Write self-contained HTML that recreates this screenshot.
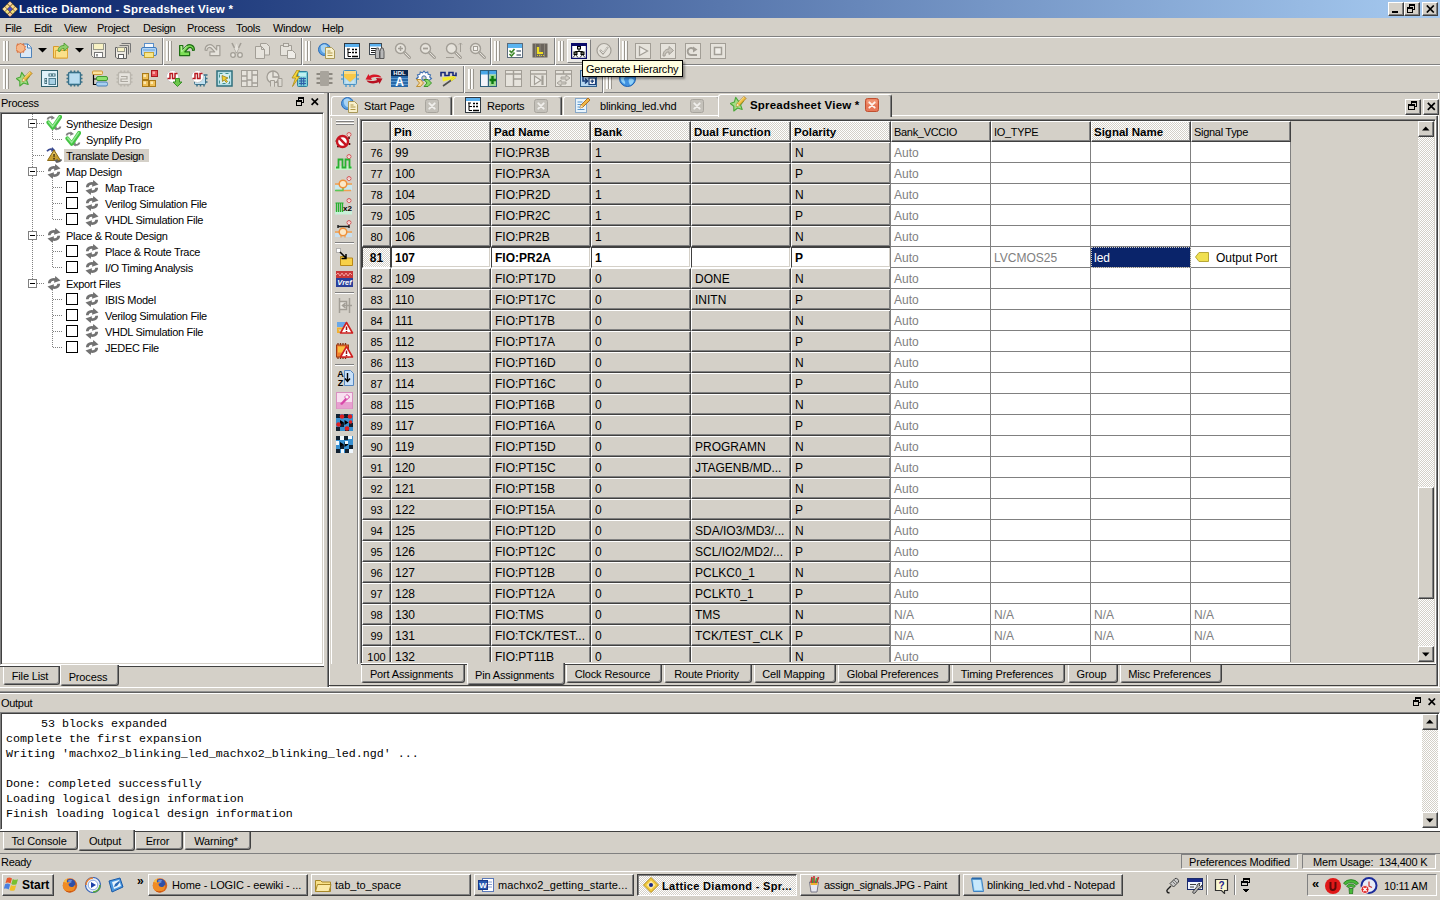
<!DOCTYPE html><html><head><meta charset="utf-8"><title>Lattice Diamond - Spreadsheet View *</title><style>
*{box-sizing:border-box;margin:0;padding:0}
html,body{width:1440px;height:900px;overflow:hidden;background:#d4d0c8}
body{font-family:"Liberation Sans",sans-serif;font-size:11px;color:#000;position:relative}
.a{position:absolute}
.t{position:absolute;white-space:nowrap;line-height:14px;font-size:11px;letter-spacing:-0.3px}
.b{font-weight:bold}
.hl{position:absolute;height:1px}
.vl{position:absolute;width:1px}
.raised{border:1px solid;border-color:#fff #404040 #404040 #fff;box-shadow:inset -1px -1px 0 #808080,inset 1px 1px 0 #d4d0c8;background:#d4d0c8}
.sunken{border:1px solid;border-color:#808080 #fff #fff #808080;box-shadow:inset 1px 1px 0 #404040,inset -1px -1px 0 #d4d0c8}
.cell{position:absolute;height:21px;border:1px solid;border-color:#fff #404040 #404040 #fff;box-shadow:inset -1px -1px 0 #808080;background:#d4d0c8;font-size:12px;line-height:21px;padding-left:3px;white-space:nowrap;overflow:hidden}
.wc{position:absolute;height:21px;border-right:1px solid #808080;border-bottom:1px solid #808080;background:#fff;font-size:12px;line-height:22px;padding-left:3px;white-space:nowrap;overflow:hidden;color:#808080}
.hdr{position:absolute;height:21px;border:1px solid;border-color:#fff #404040 #404040 #fff;box-shadow:inset -1px -1px 0 #808080;background:#d4d0c8;font-size:11.5px;line-height:20px;padding-left:2px;white-space:nowrap;overflow:hidden}
.dith{background-image:repeating-conic-gradient(#fff 0 25%,#d4d0c8 0 50%);background-size:2px 2px}
.tab{position:absolute;height:19px;border:1px solid;border-color:#fff #404040 #404040 #fff;box-shadow:inset -1px -1px 0 #808080;border-radius:0 0 3px 3px;border-top:none;font-size:11px;line-height:17px;text-align:center;white-space:nowrap;letter-spacing:-0.15px;padding-right:3px}
.mono{font-family:"Liberation Mono",monospace;font-size:11.67px;line-height:15px;white-space:pre;position:absolute}
.tbtn{position:absolute;height:22px;top:874px;border:1px solid;border-color:#fff #404040 #404040 #fff;box-shadow:inset -1px -1px 0 #808080;font-size:11px;line-height:21px;white-space:nowrap;overflow:hidden;letter-spacing:-0.3px}
</style></head><body>
<div class="a " style="left:0px;top:0px;width:1440px;height:18px;background:linear-gradient(90deg,#0a246a 0%,#a6caf0 100%)"></div>
<div class="t b" style="left:19px;top:2px;color:#fff;font-size:11.5px;letter-spacing:0.24px">Lattice Diamond - Spreadsheet View *</div>
<svg class="a" style="left:2px;top:1px" width="16" height="16" viewBox="0 0 16 16"><path d="M8 0l8 8-8 8-8-8z" fill="#5a4010"/><g fill="#f8d888"><path d="M8 0.500l2.300 2.300-2.300 2.300-2.300-2.300z" fill="#fbd8a8"/><path d="M5.300 3.200l2.300 2.300-2.300 2.300-2.300-2.300z"/><path d="M10.700 3.200l2.300 2.300-2.300 2.300-2.300-2.300z"/><path d="M2.700 5.800l2.300 2.300-2.300 2.300-2.300-2.300z" fill="#fbe0a0"/><path d="M13.300 5.800l2.300 2.300-2.300 2.300-2.300-2.300z" fill="#fbd890"/><path d="M5.300 8.500l2.300 2.300-2.300 2.300-2.300-2.300z" fill="#f0e080"/><path d="M10.700 8.500l2.300 2.300-2.300 2.300-2.300-2.300z" fill="#f0e080"/><path d="M8 11.200l2.300 2.300-2.300 2.300-2.300-2.300z" fill="#fbc898"/></g><path d="M8 5.500l2.600 2.600-2.600 2.600-2.600-2.600z" fill="#4848c8"/></svg>
<div class="a raised" style="left:1388px;top:2px;width:16px;height:14px"><div class="a" style="left:3px;top:8px;width:6px;height:2px;background:#000"></div></div>
<div class="a raised" style="left:1404px;top:2px;width:16px;height:14px"><svg class="a" style="left:2px;top:1px" width="9" height="10" viewBox="0 0 9 10" shape-rendering="crispEdges"><path d="M2 0h6v6h-2v-1h1v-3h-4v1h-1z M0 3h6v6h-6z M1 5v3h4v-3z" fill="#000" fill-rule="evenodd"/></svg></div>
<div class="a raised" style="left:1422px;top:2px;width:16px;height:14px"><svg class="a" style="left:3px;top:2px" width="9" height="8" viewBox="0 0 9 8"><path d="M0.800 0.500l7 7M7.800 0.500l-7 7" stroke="#000" stroke-width="1.700" fill="none"/></svg></div>
<div class="t " style="left:5px;top:21px;">File</div>
<div class="t " style="left:34px;top:21px;">Edit</div>
<div class="t " style="left:64px;top:21px;">View</div>
<div class="t " style="left:97px;top:21px;">Project</div>
<div class="t " style="left:143px;top:21px;">Design</div>
<div class="t " style="left:187px;top:21px;">Process</div>
<div class="t " style="left:236px;top:21px;">Tools</div>
<div class="t " style="left:273px;top:21px;">Window</div>
<div class="t " style="left:322px;top:21px;">Help</div>
<div class="hl" style="left:0px;top:36px;width:1440px;background:#808080"></div>
<div class="hl" style="left:0px;top:37px;width:1440px;background:#fff"></div>
<div class="hl" style="left:0px;top:64px;width:1440px;background:#808080"></div>
<div class="hl" style="left:0px;top:65px;width:1440px;background:#fff"></div>
<div class="hl" style="left:0px;top:92px;width:1440px;background:#808080"></div>
<div class="vl" style="left:3px;top:41px;height:20px;background:#fff"></div>
<div class="vl" style="left:4px;top:41px;height:20px;background:#f4f3f0"></div>
<div class="vl" style="left:5px;top:41px;height:20px;background:#9a968e"></div>
<div class="vl" style="left:6px;top:41px;height:20px;background:#fff"></div>
<div class="vl" style="left:7px;top:41px;height:20px;background:#f4f3f0"></div>
<div class="vl" style="left:8px;top:41px;height:20px;background:#9a968e"></div>
<svg class="a" style="left:16px;top:42px" width="17" height="17" viewBox="0 0 17 17" ><path d="M4.500 5.500v10h11v-10l-3.500-3.500h-5z" fill="#dbe8f6" stroke="#4f82b8"/><path d="M11.500 2v4h4" fill="#f4f8fc" stroke="#4f82b8"/><path d="M4.500 1l1.300 1.400 1.900-.5.100 1.900 1.800.7-1 1.600 1 1.600-1.800.7-.1 1.900-1.900-.5-1.300 1.400-1.300-1.400-1.900.5-.1-1.900-1.800-.7 1-1.600-1-1.600 1.800-.7.100-1.900 1.900.5z" fill="#f6b88a" stroke="#d8642c" stroke-width=".9"/></svg>
<svg class="a" style="left:38px;top:48px" width="9" height="5" viewBox="0 0 9 5" ><path d="M0 0h9l-4.500 4.500z" fill="#000"/></svg>
<svg class="a" style="left:52px;top:42px" width="17" height="17" viewBox="0 0 17 17" ><path d="M1.500 4.500h5l1 1.500h8v10h-14z" fill="#f9d978" stroke="#d79a2a"/><path d="M3.500 8.500h12v7.500h-12z" fill="#fbe08a" stroke="#e0a838"/><path d="M6 9c0-4 3-5.500 6-5.500v-2.500l4.500 4-4.500 4v-2.500c-2 0-3.500.5-4 3z" fill="#8fd06a" stroke="#4e9a32" stroke-width=".9"/></svg>
<svg class="a" style="left:75px;top:48px" width="9" height="5" viewBox="0 0 9 5" ><path d="M0 0h9l-4.500 4.500z" fill="#000"/></svg>
<svg class="a" style="left:90px;top:42px" width="17" height="17" viewBox="0 0 17 17" ><path d="M1.500 1.500h14v14h-12l-2-2z" fill="#ece9e2" stroke="#767676"/><rect x="3.500" y="1.500" width="10" height="6" fill="#f8f2c4" stroke="#9a9a8a"/><rect x="4.500" y="10.500" width="8" height="5" fill="#fff" stroke="#767676"/><rect x="6" y="12" width="2" height="2.500" fill="#999"/></svg>
<svg class="a" style="left:114px;top:42px" width="18" height="18" viewBox="0 0 18 18" ><path d="M7.500 1.500h9v9" fill="none" stroke="#767676"/><path d="M5.500 3.500h9v9" fill="none" stroke="#767676"/><path d="M1.500 5.500h11v11h-9.500l-1.500-1.500z" fill="#ece9e2" stroke="#606060"/><rect x="3.500" y="5.500" width="7" height="4" fill="#f8f2c4" stroke="#9a9a8a"/><rect x="4.500" y="12.500" width="5" height="4" fill="#fff" stroke="#606060"/></svg>
<svg class="a" style="left:140px;top:42px" width="18" height="17" viewBox="0 0 18 17" ><rect x="4.500" y="1.500" width="9" height="5" fill="#f4f8fc" stroke="#5b8fc8"/><rect x="1.500" y="5.500" width="15" height="8" rx="1.500" fill="#b8d6f2" stroke="#3f7cc0"/><rect x="3" y="7" width="12" height="2" fill="#8cbcea"/><rect x="4.500" y="10.500" width="9" height="5" fill="#f8e68a" stroke="#c8a838"/></svg>
<div class="vl" style="left:162px;top:38px;height:27px;background:#808080"></div>
<div class="vl" style="left:163px;top:38px;height:27px;background:#fff"></div>
<div class="vl" style="left:166px;top:41px;height:20px;background:#fff"></div>
<div class="vl" style="left:167px;top:41px;height:20px;background:#f4f3f0"></div>
<div class="vl" style="left:168px;top:41px;height:20px;background:#9a968e"></div>
<div class="vl" style="left:169px;top:41px;height:20px;background:#fff"></div>
<div class="vl" style="left:170px;top:41px;height:20px;background:#f4f3f0"></div>
<div class="vl" style="left:171px;top:41px;height:20px;background:#9a968e"></div>
<svg class="a" style="left:179px;top:44px" width="17" height="14" viewBox="0 0 17 14" ><path d="M0.600 1.600h3.200v4.300l3.800-4c2.500-2.300 8-1.300 7.800 4.200l-1.800.3c0-2.600-2.400-3.800-4.200-2.400l-3.600 3.900h4.800v3.700h-10z" fill="#7fe058" stroke="#1f6f14" stroke-width="1.200" stroke-linejoin="round"/><path d="M1.600 2.600h1.200v5l5-5.300" stroke="#c8f8b0" stroke-width="1" fill="none"/></svg>
<svg class="a" style="left:204px;top:44px" width="17" height="14" viewBox="0 0 17 14" ><g transform="translate(16.500,0) scale(-1,1)"><path d="M0.600 1.600h3.200v4.300l3.800-4c2.500-2.300 8-1.300 7.800 4.200l-1.800.3c0-2.600-2.400-3.800-4.200-2.400l-3.600 3.900h4.800v3.700h-10z" fill="#e6e3dc" stroke="#a29e96" stroke-width="1.200" stroke-linejoin="round"/></g></svg>
<svg class="a" style="left:229px;top:42px" width="16" height="17" viewBox="0 0 16 17" ><path d="M3 1l5 10M12 1l-5 10" stroke="#a29e96" stroke-width="1.600" fill="none"/><path d="M5.500 6.500l2 4 2-4-2-5z" fill="#e6e3dc"/><circle cx="4" cy="13" r="2.300" fill="#e6e3dc" stroke="#a29e96" stroke-width="1.300"/><circle cx="11" cy="13" r="2.300" fill="#e6e3dc" stroke="#a29e96" stroke-width="1.300"/></svg>
<svg class="a" style="left:254px;top:42px" width="17" height="18" viewBox="0 0 17 18" ><path d="M6.500 1.500h6l3 3v8.500h-9z" fill="#e6e3dc" stroke="#a29e96"/><path d="M1.500 4.500h6l3 3v9h-9z" fill="#e6e3dc" stroke="#a29e96"/><path d="M7.500 4.500v3h3" fill="none" stroke="#a29e96"/></svg>
<svg class="a" style="left:279px;top:42px" width="18" height="18" viewBox="0 0 18 18" ><path d="M1.500 3.500h11v10h-11z" fill="#e6e3dc" stroke="#a29e96"/><rect x="4.500" y="1.500" width="5" height="3" fill="#e6e3dc" stroke="#a29e96"/><path d="M8.500 8.500h5l3 3v5h-8z" fill="#efede8" stroke="#a29e96"/></svg>
<div class="vl" style="left:301px;top:38px;height:27px;background:#808080"></div>
<div class="vl" style="left:302px;top:38px;height:27px;background:#fff"></div>
<div class="vl" style="left:305px;top:41px;height:20px;background:#fff"></div>
<div class="vl" style="left:306px;top:41px;height:20px;background:#f4f3f0"></div>
<div class="vl" style="left:307px;top:41px;height:20px;background:#9a968e"></div>
<div class="vl" style="left:308px;top:41px;height:20px;background:#fff"></div>
<div class="vl" style="left:309px;top:41px;height:20px;background:#f4f3f0"></div>
<div class="vl" style="left:310px;top:41px;height:20px;background:#9a968e"></div>
<svg class="a" style="left:318px;top:42px" width="18" height="18" viewBox="0 0 18 18" ><circle cx="6.500" cy="7.500" r="6" fill="#5aa0e0" stroke="#2a6cb8"/><path d="M3 4c2-2 5-2 6 0s-2 4-1 7c-3 1-6-3-5-7z" fill="#a8d4f4"/><path d="M7.500 5.500h6l3 3v8h-9z" fill="#f8f0cc" stroke="#a89858"/><path d="M9.500 9h3M9.500 11h5M9.500 13.500h5" stroke="#b09848" stroke-width="1.200"/></svg>
<svg class="a" style="left:343px;top:42px" width="18" height="18" viewBox="0 0 18 18" ><rect x="1.500" y="1.500" width="15" height="15" fill="#fff" stroke="#303840"/><rect x="2" y="2" width="14" height="3" fill="#5ab0ee"/><path d="M4 7h3M5 7v7.500h3M5 10.500h3" stroke="#000" fill="none"/><path d="M9 7.500h6M9 10.500h6" stroke="#000" stroke-width="1.500" stroke-dasharray="2 1"/><path d="M9 14.500h6" stroke="#000" stroke-width="1.500"/></svg>
<svg class="a" style="left:368px;top:42px" width="18" height="18" viewBox="0 0 18 18" ><rect x="1.500" y="1.500" width="12" height="11" fill="#fff" stroke="#404850"/><rect x="2" y="2" width="11" height="2.500" fill="#5ab0ee"/><path d="M3 6.500h5M3 8.500h5M3 10.500h4" stroke="#202020" stroke-width="1.200"/><path d="M7.500 9.500l1-3.500h2l1 3.500v7h-4z M12 9.500l1-3.500h2l1 3.500v7h-4z" fill="#b8b8b8" stroke="#505050" stroke-width=".9"/></svg>
<svg class="a" style="left:394px;top:42px" width="18" height="18" viewBox="0 0 18 18" ><circle cx="6.500" cy="6.500" r="5" fill="#e6e3dc" stroke="#a29e96" stroke-width="1.400"/><path d="M10.500 10.500l5 5" stroke="#a29e96" stroke-width="3" stroke-linecap="round"/><path d="M11 11l4.500 4.500" stroke="#e6e3dc" stroke-width="1" stroke-linecap="round"/><path d="M4 6.500h5M6.500 4v5" stroke="#a29e96" stroke-width="1.400"/></svg>
<svg class="a" style="left:419px;top:42px" width="18" height="18" viewBox="0 0 18 18" ><circle cx="6.500" cy="6.500" r="5" fill="#e6e3dc" stroke="#a29e96" stroke-width="1.400"/><path d="M10.500 10.500l5 5" stroke="#a29e96" stroke-width="3" stroke-linecap="round"/><path d="M11 11l4.500 4.500" stroke="#e6e3dc" stroke-width="1" stroke-linecap="round"/><path d="M4 6.500h5" stroke="#a29e96" stroke-width="1.800"/></svg>
<svg class="a" style="left:445px;top:42px" width="18" height="18" viewBox="0 0 18 18" ><circle cx="6.500" cy="6.500" r="5" fill="#e6e3dc" stroke="#a29e96" stroke-width="1.400"/><path d="M10.500 10.500l5 5" stroke="#a29e96" stroke-width="3" stroke-linecap="round"/><path d="M11 11l4.500 4.500" stroke="#e6e3dc" stroke-width="1" stroke-linecap="round"/><path d="M15.500 1v9M14 2.500l1.500-1.500 1.500 1.500M1 15.500h8" stroke="#a29e96" fill="none"/></svg>
<svg class="a" style="left:469px;top:42px" width="18" height="18" viewBox="0 0 18 18" ><circle cx="6.500" cy="6.500" r="5" fill="#e6e3dc" stroke="#a29e96" stroke-width="1.400"/><path d="M10.500 10.500l5 5" stroke="#a29e96" stroke-width="3" stroke-linecap="round"/><path d="M11 11l4.500 4.500" stroke="#e6e3dc" stroke-width="1" stroke-linecap="round"/><rect x="4.500" y="4.500" width="4" height="4" fill="#f4f2ee" stroke="#a29e96"/></svg>
<div class="vl" style="left:490px;top:38px;height:27px;background:#808080"></div>
<div class="vl" style="left:491px;top:38px;height:27px;background:#fff"></div>
<div class="vl" style="left:494px;top:41px;height:20px;background:#fff"></div>
<div class="vl" style="left:495px;top:41px;height:20px;background:#f4f3f0"></div>
<div class="vl" style="left:496px;top:41px;height:20px;background:#9a968e"></div>
<div class="vl" style="left:497px;top:41px;height:20px;background:#fff"></div>
<div class="vl" style="left:498px;top:41px;height:20px;background:#f4f3f0"></div>
<div class="vl" style="left:499px;top:41px;height:20px;background:#9a968e"></div>
<svg class="a" style="left:507px;top:42px" width="17" height="17" viewBox="0 0 17 17" ><rect x="0.500" y="1.500" width="15" height="14" fill="#fff" stroke="#5a6a7a"/><rect x="1" y="2" width="14" height="4" fill="#5ab4f0"/><path d="M2.500 8.500l2 2 3-3.500M2.500 12l2 2 3-3.500" stroke="#3f8a2c" stroke-width="1.700" fill="none"/><path d="M9.500 9h4.500M9.500 13h4.500" stroke="#8a96a2" stroke-width="2"/></svg>
<svg class="a" style="left:532px;top:42px" width="17" height="17" viewBox="0 0 17 17" ><rect x="0.500" y="1.500" width="15" height="14" fill="#6a645c"/><path d="M3.500 2v13M8 2v13M12.500 2v13" stroke="#8a8478" stroke-width="1"/><path d="M6 5v6h5" stroke="#f0e020" stroke-width="2.200" fill="none"/><path d="M5 13.500h8" stroke="#d8cc30" stroke-dasharray="1 1"/></svg>
<div class="vl" style="left:554px;top:38px;height:27px;background:#808080"></div>
<div class="vl" style="left:555px;top:38px;height:27px;background:#fff"></div>
<div class="vl" style="left:558px;top:41px;height:20px;background:#fff"></div>
<div class="vl" style="left:559px;top:41px;height:20px;background:#f4f3f0"></div>
<div class="vl" style="left:560px;top:41px;height:20px;background:#9a968e"></div>
<div class="vl" style="left:561px;top:41px;height:20px;background:#fff"></div>
<div class="vl" style="left:562px;top:41px;height:20px;background:#f4f3f0"></div>
<div class="vl" style="left:563px;top:41px;height:20px;background:#9a968e"></div>
<div class="a" style="left:567px;top:39px;width:24px;height:24px;background:#ebe9e4;border:1px solid;border-color:#fff #808080 #808080 #fff"></div>
<svg class="a" style="left:571px;top:43px" width="16" height="16" viewBox="0 0 16 16" ><rect x="0.500" y="0.500" width="15" height="15" fill="#fff" stroke="#0a0a6a" stroke-width="1.400"/><rect x="0" y="0" width="16" height="3" fill="#0a0a6a"/><path d="M8 5v3M4.500 10v-1.500h7v1.500" stroke="#000" fill="none"/><rect x="6.500" y="3.500" width="3" height="2.500" fill="#c8c8c8" stroke="#000"/><rect x="3" y="9" width="3" height="2.500" fill="#707060" stroke="#000"/><rect x="10" y="9" width="3" height="2.500" fill="#707060" stroke="#000"/><path d="M2 14.500l2.500-3 2.500 3M9 14.500l2.500-3 2.500 3" stroke="#000" stroke-width=".8" fill="none"/></svg>
<svg class="a" style="left:596px;top:42px" width="17" height="17" viewBox="0 0 17 17" ><circle cx="8" cy="8.500" r="7" fill="#e6e3dc" stroke="#a29e96" stroke-width="1.200"/><path d="M4 8l3 3.500 5-6.500" stroke="#a29e96" stroke-width="2" fill="none"/><path d="M4.500 8.500l2.500 2.500 4.500-5.500" stroke="#f4f2ee" stroke-width=".8" fill="none"/></svg>
<div class="vl" style="left:618px;top:38px;height:27px;background:#808080"></div>
<div class="vl" style="left:619px;top:38px;height:27px;background:#fff"></div>
<div class="vl" style="left:622px;top:41px;height:20px;background:#fff"></div>
<div class="vl" style="left:623px;top:41px;height:20px;background:#f4f3f0"></div>
<div class="vl" style="left:624px;top:41px;height:20px;background:#9a968e"></div>
<div class="vl" style="left:625px;top:41px;height:20px;background:#fff"></div>
<div class="vl" style="left:626px;top:41px;height:20px;background:#f4f3f0"></div>
<div class="vl" style="left:627px;top:41px;height:20px;background:#9a968e"></div>
<svg class="a" style="left:635px;top:43px" width="17" height="17" viewBox="0 0 17 17" ><rect x="0.500" y="0.500" width="15" height="15" fill="#e6e3dc" stroke="#a29e96"/><path d="M4.500 3.500v9l8-4.500z" fill="#efede8" stroke="#a29e96" stroke-width="1.300"/></svg>
<svg class="a" style="left:660px;top:43px" width="17" height="17" viewBox="0 0 17 17" ><rect x="0.500" y="0.500" width="15" height="15" fill="#e6e3dc" stroke="#a29e96"/><path d="M3 13c0-5 3-7 6-7v-2.500l4.500 4-4.500 4v-2.500c-2 0-4 1-4 4z" fill="#c8c4bc" stroke="#a29e96"/></svg>
<svg class="a" style="left:685px;top:43px" width="17" height="17" viewBox="0 0 17 17" ><rect x="0.500" y="0.500" width="15" height="15" fill="#e6e3dc" stroke="#a29e96"/><path d="M12 12h-6a3.500 3.500 0 1 1 3-5.500" fill="none" stroke="#a29e96" stroke-width="2"/><path d="M8 3.500l4.500 3-4.500 3z" fill="#a29e96"/></svg>
<svg class="a" style="left:710px;top:43px" width="17" height="17" viewBox="0 0 17 17" ><rect x="0.500" y="0.500" width="15" height="15" fill="#e6e3dc" stroke="#a29e96"/><rect x="4.500" y="4.500" width="7" height="7" fill="#f0eee9" stroke="#a29e96" stroke-width="1.500"/></svg>
<div class="vl" style="left:3px;top:69px;height:20px;background:#fff"></div>
<div class="vl" style="left:4px;top:69px;height:20px;background:#f4f3f0"></div>
<div class="vl" style="left:5px;top:69px;height:20px;background:#9a968e"></div>
<div class="vl" style="left:6px;top:69px;height:20px;background:#fff"></div>
<div class="vl" style="left:7px;top:69px;height:20px;background:#f4f3f0"></div>
<div class="vl" style="left:8px;top:69px;height:20px;background:#9a968e"></div>
<svg class="a" style="left:16px;top:70px" width="17" height="17" viewBox="0 0 17 17" ><path d="M5.7 2.4L8.6 6.3L13.4 6.1L10.6 10L12.2 14.5L7.600 13L3.800 16L3.800 11.200L0.300 8.500L4.400 7z" fill="#a4dc84" stroke="#4aa838" stroke-width="1.100" stroke-linejoin="round"/><path d="M6.300 11.300l.9-2.800 6.800-7 2 2-6.800 7z" fill="#f0c040" stroke="#b07818" stroke-width=".9"/><path d="M6.300 11.300l.9-2.800 1.900 1.900z" fill="#f8ecc8"/><path d="M8.500 7.800l5.800-6" stroke="#fbe8a0" stroke-width=".9"/></svg>
<svg class="a" style="left:41px;top:70px" width="17" height="17" viewBox="0 0 17 17" ><rect x="0.500" y="0.500" width="16" height="16" fill="#e0f2fa" stroke="#2f5f6c" stroke-width="1"/><rect x="7.500" y="3.500" width="7" height="3" fill="#2f5f6c"/><rect x="8.500" y="4.200" width="1.800" height="1.600" fill="#e0f2fa"/><rect x="11.700" y="4.200" width="1.800" height="1.600" fill="#e0f2fa"/><rect x="3.500" y="8" width="2.500" height="6" fill="#2f5f6c"/><rect x="4.200" y="8.800" width="1.200" height="1.600" fill="#e0f2fa"/><rect x="4.200" y="11.600" width="1.200" height="1.600" fill="#e0f2fa"/><rect x="8" y="8.500" width="6.500" height="6" fill="#a8d0e4" stroke="#4a7a8c"/></svg>
<svg class="a" style="left:66px;top:70px" width="17" height="17" viewBox="0 0 17 17" ><path d="M5 0.500v16M8.500 0.500v16M12 0.500v16M0.500 5h16M0.500 8.500h16M0.500 12h16" stroke="#3a7088" stroke-width="1.600"/><rect x="2.500" y="2.500" width="12" height="12" rx="1" fill="#a8d4ea" stroke="#3a7088" stroke-width="1.300"/><rect x="4" y="4" width="9" height="9" fill="#b8dcf0"/></svg>
<svg class="a" style="left:91px;top:70px" width="18" height="17" viewBox="0 0 18 17" ><path d="M2.500 3v11.500h3M2.500 9h3" stroke="#000" fill="none" stroke-width="1.200"/><rect x="1.500" y="1" width="10" height="3.500" rx="1" fill="#fbe3a0" stroke="#d09838"/><rect x="5.500" y="6.500" width="11" height="4" rx="1.500" fill="#8fe070" stroke="#3f9a30"/><rect x="5.500" y="12" width="11" height="4" rx="1.500" fill="#a8d0f0" stroke="#4a80b8"/></svg>
<svg class="a" style="left:116px;top:70px" width="17" height="17" viewBox="0 0 17 17" opacity=".9"><path d="M5 0.500v16M8.500 0.500v16M12 0.500v16M0.500 5h16M0.500 8.500h16M0.500 12h16" stroke="#b8b4ac" stroke-width="1.600"/><rect x="2.500" y="2.500" width="12" height="12" rx="1" fill="#e8e6e0" stroke="#b8b4ac" stroke-width="1.300"/><path d="M5 6.500h6v2.500h-6v2.500h7" stroke="#a8a49c" fill="none" stroke-width="1.200"/></svg>
<svg class="a" style="left:141px;top:70px" width="18" height="18" viewBox="0 0 18 18" ><rect x="1.500" y="3.500" width="6" height="6" fill="#f0c058" stroke="#a87818"/><rect x="1.500" y="10.500" width="6" height="6" fill="#f0c058" stroke="#a87818"/><rect x="8.500" y="10.500" width="6" height="6" fill="#f0c058" stroke="#a87818"/><rect x="2.500" y="4.500" width="2.500" height="2.500" fill="#fbe8b0"/><rect x="2.500" y="11.500" width="2.500" height="2.500" fill="#fbe8b0"/><rect x="9.500" y="11.500" width="2.500" height="2.500" fill="#fbe8b0"/><rect x="10.500" y="0.500" width="6" height="6" fill="#e85058" stroke="#a81820"/><rect x="11.500" y="1.500" width="2.500" height="2.500" fill="#f8a8a8"/></svg>
<svg class="a" style="left:166px;top:70px" width="18" height="18" viewBox="0 0 18 18" ><circle cx="6.500" cy="6.500" r="6" fill="#fff" stroke="#c8c8c8"/><path d="M1.500 8.500h2.500v-5h2.500v5h2.500v-5h2.500" stroke="#b81820" stroke-width="1.500" fill="none"/><path d="M9.500 8.500h4v3.500h2.500l-4.500 4.500-4.500-4.500h2.500z" fill="#6cc84a" stroke="#2f8a20" stroke-width=".9"/></svg>
<svg class="a" style="left:191px;top:70px" width="18" height="18" viewBox="0 0 18 18" ><path d="M6 12v4.500M9.500 12v4.500M13 12v4.500M12 5h4.500M12 8.500h4.500M12 12h4.500" stroke="#3a7088" stroke-width="1.500"/><rect x="3.500" y="5.500" width="11" height="9" rx="1" fill="#c0e0f0" stroke="#3a7088"/><circle cx="6.500" cy="6.500" r="6" fill="#fff" stroke="#c8c8c8"/><path d="M1.500 8.500h2.500v-5h2.500v5h2.500v-5h2.500" stroke="#b81820" stroke-width="1.500" fill="none"/></svg>
<svg class="a" style="left:216px;top:70px" width="17" height="17" viewBox="0 0 17 17" ><rect x="1" y="1" width="15" height="15" fill="#b8e0e8" stroke="#2f6f7c" stroke-width="1.500"/><rect x="3.500" y="3.500" width="10" height="10" fill="#d8f0f0" stroke="#3f8f8c" stroke-dasharray="3 3"/><path d="M6 5.500l6 2.500-2.500 1 2 2.500-1.200 1-2-2.500-1.800 1.500z" fill="#f0d030" stroke="#8a7010" stroke-width=".7"/></svg>
<svg class="a" style="left:241px;top:70px" width="17" height="17" viewBox="0 0 17 17" ><rect x="0.500" y="0.500" width="16" height="16" fill="#e6e3dc" stroke="#a29e96"/><path d="M6 1v5h-5M6 6v4h5v6M11 1v9M11 5h5M1 11h5v5M11 13h5" stroke="#a29e96" fill="none" stroke-width="1.300"/></svg>
<svg class="a" style="left:266px;top:70px" width="17" height="17" viewBox="0 0 17 17" ><circle cx="7" cy="7" r="6" fill="#e6e3dc" stroke="#a29e96" stroke-width="1.300"/><path d="M7 1v6h6" stroke="#a29e96" fill="none" stroke-width="1.300"/><path d="M4.500 16.500v-6h4v6M8.500 16.500v-4h3.500v4M12 16.500v-8h4v8z" fill="#dcd9d2" stroke="#a29e96"/></svg>
<svg class="a" style="left:291px;top:70px" width="17" height="17" viewBox="0 0 17 17" ><rect x="6.500" y="1.500" width="10" height="15" rx="1" fill="#7ad0d8" stroke="#2f7f9c"/><rect x="8" y="3" width="7" height="3.500" fill="#c0f0f0"/><path d="M8 8.500h7M8 11h7M8 13.500h7M10.300 7.500v8M12.700 7.500v8" stroke="#2f5fa8" stroke-width="1.200"/><path d="M6 0l-5 8h3.500l-3 8.500 7-10h-3.500l3.500-6.500z" fill="#f8d838" stroke="#a88818" stroke-width=".8"/></svg>
<svg class="a" style="left:316px;top:70px" width="17" height="17" viewBox="0 0 17 17" ><path d="M0.500 4h16M0.500 8.500h16M0.500 13h16" stroke="#8c8880" stroke-width="1.800"/><rect x="4" y="1" width="9" height="15" rx="1" fill="#a8a49c"/></svg>
<svg class="a" style="left:340px;top:69px" width="20" height="19" viewBox="0 0 20 19" ><path d="M6 14v4M10 14v4M14 14v4M1 6h3M1 10h3M16 6h3M16 10h3" stroke="#5aa0d0" stroke-width="1.500"/><rect x="3.500" y="1.500" width="13" height="14" rx="1" fill="#a8d4ec" stroke="#4a90c0"/><path d="M4 2h12v6l-6 5-6-5z" fill="#f8c848"/><path d="M4 2h12v3h-12z" fill="#fbdc88"/><path d="M5.500 10l4.500 4 4.500-4v4.500h-9z" fill="#c8e4f0"/></svg>
<svg class="a" style="left:365px;top:72px" width="19" height="14" viewBox="0 0 19 14" ><path d="M16.500 5.500c-1.500-3-8-4-12-1.500l-1-2-3 5.500 6.500.500-1-2c3-1.500 7-1 10.500-.500z" fill="#d81828"/><path d="M1.500 8.500c1.500 3 8 4 12 1.500l1 2 3-5.500-6.500-.5 1 2c-3 1.500-7 1-10.500.5z" fill="#b81020"/></svg>
<svg class="a" style="left:391px;top:70px" width="17" height="17" viewBox="0 0 17 17" ><rect x="0" y="0" width="17" height="17" fill="#2868a8"/><rect x="0" y="0" width="17" height="6" fill="#0a2850"/><path d="M0 8.500h17M0 11.500h17M0 14.500h17" stroke="#5a98d0" stroke-width="1"/><text x="8.500" y="5.300" font-family="Liberation Sans,sans-serif" font-weight="bold" font-size="6" fill="#fff" text-anchor="middle">HDL</text><text x="8.500" y="16" font-family="Liberation Sans,sans-serif" font-weight="bold" font-size="12" fill="#fff" text-anchor="middle">A</text></svg>
<svg class="a" style="left:415px;top:70px" width="18" height="18" viewBox="0 0 18 18" ><path d="M9 1l1.500 1.800 2.200-.8.500 2.300 2.300.5-.8 2.200 1.800 1.500-1.800 1.500h-11.400l-1.800-1.500 1.800-1.500-.8-2.200 2.300-.5.500-2.300 2.200.8z" fill="#fff" stroke="#3f6fb0" stroke-width="1.100"/><circle cx="9" cy="8" r="2.200" fill="#d4d0c8" stroke="#3f6fb0"/><path d="M1.500 9.500h4l3 3.500-3 3.500h-4l3-3.500z" fill="#f8d898" stroke="#b88828" stroke-width=".9"/><path d="M9 9.500h4l3.500 3.500-3.500 3.500h-4l3-3.500z" fill="#88d868" stroke="#2f8a20" stroke-width=".9"/></svg>
<svg class="a" style="left:440px;top:70px" width="18" height="18" viewBox="0 0 18 18" ><path d="M1 6.500v-4h4v3h4v-3h4v3h3v-3" stroke="#1a2a7a" stroke-width="1.600" fill="none"/><path d="M2 7.500l12-1.500 1 2.500-12 3z" fill="#f4ec30"/><path d="M3 16l12-8.500" stroke="#505050" stroke-width="1.600"/><path d="M11 10.500l4.500-3.500" stroke="#f4ec30" stroke-width="2"/></svg>
<div class="vl" style="left:463px;top:66px;height:27px;background:#808080"></div>
<div class="vl" style="left:464px;top:66px;height:27px;background:#fff"></div>
<div class="vl" style="left:468px;top:69px;height:20px;background:#fff"></div>
<div class="vl" style="left:469px;top:69px;height:20px;background:#f4f3f0"></div>
<div class="vl" style="left:470px;top:69px;height:20px;background:#9a968e"></div>
<div class="vl" style="left:471px;top:69px;height:20px;background:#fff"></div>
<div class="vl" style="left:472px;top:69px;height:20px;background:#f4f3f0"></div>
<div class="vl" style="left:473px;top:69px;height:20px;background:#9a968e"></div>
<svg class="a" style="left:480px;top:70px" width="17" height="17" viewBox="0 0 17 17" ><rect x="0.500" y="0.500" width="16" height="16" fill="#f4f4fa" stroke="#2f5f7c"/><rect x="1" y="1" width="15" height="3.500" fill="#4aa8e8"/><path d="M8.500 1v15.500" stroke="#2f5f7c" stroke-width="1.400"/><rect x="9.500" y="4.500" width="6.500" height="11.500" fill="#9ad890"/><path d="M12.500 6v8M9.500 10h6.500" stroke="#0a7a10" stroke-width="2.400"/></svg>
<svg class="a" style="left:505px;top:70px" width="17" height="17" viewBox="0 0 17 17" ><rect x="0.500" y="0.500" width="16" height="16" fill="#e6e3dc" stroke="#a29e96"/><path d="M0.500 4h16M8.500 1v15.500M8.500 9h8" stroke="#a29e96" stroke-width="1.400"/></svg>
<svg class="a" style="left:530px;top:70px" width="17" height="17" viewBox="0 0 17 17" ><rect x="0.500" y="0.500" width="16" height="16" fill="#e6e3dc" stroke="#a29e96"/><path d="M0.500 4h16" stroke="#a29e96" stroke-width="1.400"/><path d="M4.500 6v8.500l6.500-4.250z" fill="#efede8" stroke="#a29e96" stroke-width="1.200"/><path d="M12.500 5.500v9.500" stroke="#a29e96" stroke-width="2.200"/></svg>
<svg class="a" style="left:555px;top:70px" width="17" height="17" viewBox="0 0 17 17" ><rect x="0.500" y="0.500" width="16" height="16" fill="#e6e3dc" stroke="#a29e96"/><path d="M0.500 4h16M8.500 1v3" stroke="#a29e96" stroke-width="1.400"/><path d="M6 7h5v-2l4 3-4 3v-2h-5z M11 12h-5v-2l-4 3 4 3v-2h5z" fill="#d4d0c8" stroke="#a29e96" stroke-width=".9"/></svg>
<svg class="a" style="left:580px;top:70px" width="17" height="17" viewBox="0 0 17 17" ><rect x="0.500" y="0.500" width="16" height="16" fill="#b8d8f0" stroke="#2f5f8c"/><path d="M3 3v8h4M5 8.500l2.500 2.500-2.500 2.500" stroke="#1a3f7a" stroke-width="1.600" fill="none"/><rect x="9" y="8" width="6.500" height="6.500" fill="#fff" stroke="#1a3f7a" stroke-width="1.200"/><path d="M12.200 9.500v3.500M10.500 11.200h3.500" stroke="#1a3f7a" stroke-width="1.300"/></svg>
<div class="vl" style="left:602px;top:66px;height:27px;background:#808080"></div>
<div class="vl" style="left:603px;top:66px;height:27px;background:#fff"></div>
<div class="vl" style="left:606px;top:69px;height:20px;background:#fff"></div>
<div class="vl" style="left:607px;top:69px;height:20px;background:#f4f3f0"></div>
<div class="vl" style="left:608px;top:69px;height:20px;background:#9a968e"></div>
<div class="vl" style="left:609px;top:69px;height:20px;background:#fff"></div>
<div class="vl" style="left:610px;top:69px;height:20px;background:#f4f3f0"></div>
<div class="vl" style="left:611px;top:69px;height:20px;background:#9a968e"></div>
<svg class="a" style="left:619px;top:70px" width="17" height="17" viewBox="0 0 17 17" ><circle cx="8.500" cy="8.500" r="8" fill="#3f90e0" stroke="#1a5fb0"/><path d="M4 3c2-1 4 0 4 2s-3 2-3 4 2 3 1 5c-3-1-5-4-4-8z M10 9c2-1 4 0 5 1-.5 3-2 4.500-4 5-1-2-2-4-1-6z M10 2c2 0 4 1.500 5 3.500-2 .5-3.500 0-5-1z" fill="#8fd0f8"/></svg>
<div class="a" style="left:582px;top:60px;width:101px;height:17px;background:#ffffe1;border:1px solid #000;box-shadow:2px 2px 2px rgba(0,0,0,.35)"></div>
<div class="t " style="left:586px;top:62px;letter-spacing:-0.2px">Generate Hierarchy</div>
<div class="t " style="left:1px;top:96px;">Process</div>
<svg class="a" style="left:296px;top:97px" width="26" height="10" viewBox="0 0 26 10" shape-rendering="crispEdges"><path d="M2 0h6v6h-2v-1h1v-3h-4v1h-1z M0 3h6v6h-6z M1 5v3h4v-3z" fill="#000" fill-rule="evenodd"/><path d="M15.6 1.500l6.400 6.400M22 1.500l-6.400 6.400" stroke="#000" stroke-width="1.7" shape-rendering="auto" fill="none"/></svg>
<div class="hl" style="left:0px;top:93px;width:324px;background:#fff"></div>
<div class="a " style="left:0px;top:112px;width:324px;height:553px;background:#fff;border:1px solid;border-color:#808080 #fff #fff #808080;box-shadow:inset 1px 1px 0 #404040,inset -1px -1px 0 #d4d0c8"></div>
<div class="a" style="left:32px;top:114px;width:1px;height:170px;background-image:repeating-linear-gradient(180deg,#808080 0 1px,transparent 1px 2px)"></div>
<div class="a" style="left:52px;top:130px;width:1px;height:10px;background-image:repeating-linear-gradient(180deg,#808080 0 1px,transparent 1px 2px)"></div>
<div class="a" style="left:52px;top:180px;width:1px;height:40px;background-image:repeating-linear-gradient(180deg,#808080 0 1px,transparent 1px 2px)"></div>
<div class="a" style="left:52px;top:244px;width:1px;height:24px;background-image:repeating-linear-gradient(180deg,#808080 0 1px,transparent 1px 2px)"></div>
<div class="a" style="left:52px;top:292px;width:1px;height:56px;background-image:repeating-linear-gradient(180deg,#808080 0 1px,transparent 1px 2px)"></div>
<div class="a" style="left:33px;top:123px;width:12px;height:1px;background-image:repeating-linear-gradient(90deg,#808080 0 1px,transparent 1px 2px)"></div>
<div class="a" style="left:28px;top:119px;width:9px;height:9px;background:#fff;border:1px solid #808080"></div>
<div class="hl" style="left:30px;top:123px;width:5px;background:#000"></div>
<svg class="a" style="left:46px;top:115px" width="16" height="16" viewBox="0 0 16 16"><path d="M1.500 4.500c.5-2 3-3 5-2" stroke="#808080" stroke-width="1.800" fill="none"/><path d="M5.500 0.500l3.500 2.500-3.800 1.800z" fill="#808080"/><path d="M14.500 11.500c-.5 2-3 3-5 2" stroke="#808080" stroke-width="1.800" fill="none"/><path d="M10.500 15.500l-3.500-2.500 3.800-1.800z" fill="#808080"/><path d="M2.400 7.400l4.300 5.400 7.400-10.800" stroke="#44c444" stroke-width="4" fill="none" stroke-linecap="round" stroke-linejoin="round"/><path d="M2.800 7l3.800 4.600 7-10" stroke="#98ea98" stroke-width="1.500" fill="none" stroke-linecap="round"/></svg>
<div class="t " style="left:66px;top:117px;">Synthesize Design</div>
<div class="a" style="left:53px;top:139px;width:10px;height:1px;background-image:repeating-linear-gradient(90deg,#808080 0 1px,transparent 1px 2px)"></div>
<svg class="a" style="left:65px;top:131px" width="16" height="16" viewBox="0 0 16 16"><path d="M1.500 4.500c.5-2 3-3 5-2" stroke="#808080" stroke-width="1.800" fill="none"/><path d="M5.500 0.500l3.500 2.500-3.800 1.800z" fill="#808080"/><path d="M14.500 11.500c-.5 2-3 3-5 2" stroke="#808080" stroke-width="1.800" fill="none"/><path d="M10.500 15.500l-3.500-2.500 3.800-1.800z" fill="#808080"/><path d="M2.400 7.400l4.300 5.400 7.400-10.800" stroke="#44c444" stroke-width="4" fill="none" stroke-linecap="round" stroke-linejoin="round"/><path d="M2.800 7l3.800 4.600 7-10" stroke="#98ea98" stroke-width="1.500" fill="none" stroke-linecap="round"/></svg>
<div class="t " style="left:86px;top:133px;">Synplify Pro</div>
<div class="a" style="left:33px;top:155px;width:12px;height:1px;background-image:repeating-linear-gradient(90deg,#808080 0 1px,transparent 1px 2px)"></div>
<svg class="a" style="left:46px;top:147px" width="16" height="16" viewBox="0 0 16 16"><path d="M1 4.200c1.500-2 4-2.500 6-1.500" stroke="#3a4a90" stroke-width="1.800" fill="none"/><path d="M6 0l3.500 3.500-4.500 1.200z" fill="#3a4a90"/><path d="M8 3l6.500 10.500h-13z" fill="#c8a030" stroke="#8a6a18" stroke-width="1"/><path d="M8 4.500l2.500 4h-5z" fill="#e0c060"/><path d="M7.300 7h1.500l-.3 3.300h-.9z M7.300 11h1.500v1.400h-1.500z" fill="#3a2a08"/><path d="M15.500 12.500c-1 2-3.500 2.800-5.500 2" stroke="#606060" stroke-width="1.700" fill="none"/><path d="M11 16l-3-2.800 4-1.200z" fill="#606060"/></svg>
<div class="a " style="left:64px;top:149px;width:85px;height:13px;background:#d4d0c8"></div>
<div class="t " style="left:66px;top:149px;">Translate Design</div>
<div class="a" style="left:33px;top:171px;width:12px;height:1px;background-image:repeating-linear-gradient(90deg,#808080 0 1px,transparent 1px 2px)"></div>
<div class="a" style="left:28px;top:167px;width:9px;height:9px;background:#fff;border:1px solid #808080"></div>
<div class="hl" style="left:30px;top:171px;width:5px;background:#000"></div>
<svg class="a" style="left:46px;top:163px" width="16" height="16" viewBox="0 0 16 16"><path d="M3.300 8.300c0-3.600 4.200-5 7.400-3" stroke="#727272" stroke-width="2.700" fill="none"/><path d="M9.300 1l5.200 4.600-6.500 2.200z" fill="#727272"/><path d="M12.700 8.700c0 3.600-4.200 5-7.400 3" stroke="#727272" stroke-width="2.700" fill="none"/><path d="M6.700 16l-5.200-4.600 6.500-2.200z" fill="#727272"/></svg>
<div class="t " style="left:66px;top:165px;">Map Design</div>
<div class="a" style="left:53px;top:187px;width:10px;height:1px;background-image:repeating-linear-gradient(90deg,#808080 0 1px,transparent 1px 2px)"></div>
<div class="a" style="left:66px;top:181px;width:12px;height:12px;background:#fff;border:1px solid #000"></div>
<svg class="a" style="left:84px;top:179px" width="16" height="16" viewBox="0 0 16 16"><path d="M3.300 8.300c0-3.600 4.200-5 7.400-3" stroke="#727272" stroke-width="2.700" fill="none"/><path d="M9.300 1l5.200 4.600-6.500 2.200z" fill="#727272"/><path d="M12.700 8.700c0 3.600-4.200 5-7.400 3" stroke="#727272" stroke-width="2.700" fill="none"/><path d="M6.700 16l-5.200-4.600 6.500-2.200z" fill="#727272"/></svg>
<div class="t " style="left:105px;top:181px;">Map Trace</div>
<div class="a" style="left:53px;top:203px;width:10px;height:1px;background-image:repeating-linear-gradient(90deg,#808080 0 1px,transparent 1px 2px)"></div>
<div class="a" style="left:66px;top:197px;width:12px;height:12px;background:#fff;border:1px solid #000"></div>
<svg class="a" style="left:84px;top:195px" width="16" height="16" viewBox="0 0 16 16"><path d="M3.300 8.300c0-3.600 4.200-5 7.400-3" stroke="#727272" stroke-width="2.700" fill="none"/><path d="M9.300 1l5.200 4.600-6.500 2.200z" fill="#727272"/><path d="M12.700 8.700c0 3.600-4.200 5-7.400 3" stroke="#727272" stroke-width="2.700" fill="none"/><path d="M6.700 16l-5.200-4.600 6.500-2.200z" fill="#727272"/></svg>
<div class="t " style="left:105px;top:197px;">Verilog Simulation File</div>
<div class="a" style="left:53px;top:219px;width:10px;height:1px;background-image:repeating-linear-gradient(90deg,#808080 0 1px,transparent 1px 2px)"></div>
<div class="a" style="left:66px;top:213px;width:12px;height:12px;background:#fff;border:1px solid #000"></div>
<svg class="a" style="left:84px;top:211px" width="16" height="16" viewBox="0 0 16 16"><path d="M3.300 8.300c0-3.600 4.200-5 7.400-3" stroke="#727272" stroke-width="2.700" fill="none"/><path d="M9.300 1l5.200 4.600-6.500 2.200z" fill="#727272"/><path d="M12.700 8.700c0 3.600-4.200 5-7.400 3" stroke="#727272" stroke-width="2.700" fill="none"/><path d="M6.700 16l-5.200-4.600 6.500-2.200z" fill="#727272"/></svg>
<div class="t " style="left:105px;top:213px;">VHDL Simulation File</div>
<div class="a" style="left:33px;top:235px;width:12px;height:1px;background-image:repeating-linear-gradient(90deg,#808080 0 1px,transparent 1px 2px)"></div>
<div class="a" style="left:28px;top:231px;width:9px;height:9px;background:#fff;border:1px solid #808080"></div>
<div class="hl" style="left:30px;top:235px;width:5px;background:#000"></div>
<svg class="a" style="left:46px;top:227px" width="16" height="16" viewBox="0 0 16 16"><path d="M3.300 8.300c0-3.600 4.200-5 7.400-3" stroke="#727272" stroke-width="2.700" fill="none"/><path d="M9.300 1l5.200 4.600-6.500 2.200z" fill="#727272"/><path d="M12.700 8.700c0 3.600-4.200 5-7.400 3" stroke="#727272" stroke-width="2.700" fill="none"/><path d="M6.700 16l-5.200-4.600 6.500-2.200z" fill="#727272"/></svg>
<div class="t " style="left:66px;top:229px;">Place &amp; Route Design</div>
<div class="a" style="left:53px;top:251px;width:10px;height:1px;background-image:repeating-linear-gradient(90deg,#808080 0 1px,transparent 1px 2px)"></div>
<div class="a" style="left:66px;top:245px;width:12px;height:12px;background:#fff;border:1px solid #000"></div>
<svg class="a" style="left:84px;top:243px" width="16" height="16" viewBox="0 0 16 16"><path d="M3.300 8.300c0-3.600 4.200-5 7.400-3" stroke="#727272" stroke-width="2.700" fill="none"/><path d="M9.300 1l5.200 4.600-6.500 2.200z" fill="#727272"/><path d="M12.700 8.700c0 3.600-4.200 5-7.400 3" stroke="#727272" stroke-width="2.700" fill="none"/><path d="M6.700 16l-5.200-4.600 6.500-2.200z" fill="#727272"/></svg>
<div class="t " style="left:105px;top:245px;">Place &amp; Route Trace</div>
<div class="a" style="left:53px;top:267px;width:10px;height:1px;background-image:repeating-linear-gradient(90deg,#808080 0 1px,transparent 1px 2px)"></div>
<div class="a" style="left:66px;top:261px;width:12px;height:12px;background:#fff;border:1px solid #000"></div>
<svg class="a" style="left:84px;top:259px" width="16" height="16" viewBox="0 0 16 16"><path d="M3.300 8.300c0-3.600 4.200-5 7.400-3" stroke="#727272" stroke-width="2.700" fill="none"/><path d="M9.300 1l5.200 4.600-6.500 2.200z" fill="#727272"/><path d="M12.700 8.700c0 3.600-4.200 5-7.400 3" stroke="#727272" stroke-width="2.700" fill="none"/><path d="M6.700 16l-5.200-4.600 6.500-2.200z" fill="#727272"/></svg>
<div class="t " style="left:105px;top:261px;">I/O Timing Analysis</div>
<div class="a" style="left:33px;top:283px;width:12px;height:1px;background-image:repeating-linear-gradient(90deg,#808080 0 1px,transparent 1px 2px)"></div>
<div class="a" style="left:28px;top:279px;width:9px;height:9px;background:#fff;border:1px solid #808080"></div>
<div class="hl" style="left:30px;top:283px;width:5px;background:#000"></div>
<svg class="a" style="left:46px;top:275px" width="16" height="16" viewBox="0 0 16 16"><path d="M3.300 8.300c0-3.600 4.200-5 7.400-3" stroke="#727272" stroke-width="2.700" fill="none"/><path d="M9.300 1l5.200 4.600-6.500 2.200z" fill="#727272"/><path d="M12.700 8.700c0 3.600-4.200 5-7.400 3" stroke="#727272" stroke-width="2.700" fill="none"/><path d="M6.700 16l-5.200-4.600 6.500-2.200z" fill="#727272"/></svg>
<div class="t " style="left:66px;top:277px;">Export Files</div>
<div class="a" style="left:53px;top:299px;width:10px;height:1px;background-image:repeating-linear-gradient(90deg,#808080 0 1px,transparent 1px 2px)"></div>
<div class="a" style="left:66px;top:293px;width:12px;height:12px;background:#fff;border:1px solid #000"></div>
<svg class="a" style="left:84px;top:291px" width="16" height="16" viewBox="0 0 16 16"><path d="M3.300 8.300c0-3.600 4.200-5 7.400-3" stroke="#727272" stroke-width="2.700" fill="none"/><path d="M9.300 1l5.200 4.600-6.500 2.200z" fill="#727272"/><path d="M12.700 8.700c0 3.600-4.200 5-7.400 3" stroke="#727272" stroke-width="2.700" fill="none"/><path d="M6.700 16l-5.200-4.600 6.500-2.200z" fill="#727272"/></svg>
<div class="t " style="left:105px;top:293px;">IBIS Model</div>
<div class="a" style="left:53px;top:315px;width:10px;height:1px;background-image:repeating-linear-gradient(90deg,#808080 0 1px,transparent 1px 2px)"></div>
<div class="a" style="left:66px;top:309px;width:12px;height:12px;background:#fff;border:1px solid #000"></div>
<svg class="a" style="left:84px;top:307px" width="16" height="16" viewBox="0 0 16 16"><path d="M3.300 8.300c0-3.600 4.200-5 7.400-3" stroke="#727272" stroke-width="2.700" fill="none"/><path d="M9.300 1l5.200 4.600-6.500 2.200z" fill="#727272"/><path d="M12.700 8.700c0 3.600-4.200 5-7.400 3" stroke="#727272" stroke-width="2.700" fill="none"/><path d="M6.700 16l-5.200-4.600 6.500-2.200z" fill="#727272"/></svg>
<div class="t " style="left:105px;top:309px;">Verilog Simulation File</div>
<div class="a" style="left:53px;top:331px;width:10px;height:1px;background-image:repeating-linear-gradient(90deg,#808080 0 1px,transparent 1px 2px)"></div>
<div class="a" style="left:66px;top:325px;width:12px;height:12px;background:#fff;border:1px solid #000"></div>
<svg class="a" style="left:84px;top:323px" width="16" height="16" viewBox="0 0 16 16"><path d="M3.300 8.300c0-3.600 4.200-5 7.400-3" stroke="#727272" stroke-width="2.700" fill="none"/><path d="M9.300 1l5.200 4.600-6.500 2.200z" fill="#727272"/><path d="M12.700 8.700c0 3.600-4.200 5-7.400 3" stroke="#727272" stroke-width="2.700" fill="none"/><path d="M6.700 16l-5.200-4.600 6.500-2.200z" fill="#727272"/></svg>
<div class="t " style="left:105px;top:325px;">VHDL Simulation File</div>
<div class="a" style="left:53px;top:347px;width:10px;height:1px;background-image:repeating-linear-gradient(90deg,#808080 0 1px,transparent 1px 2px)"></div>
<div class="a" style="left:66px;top:341px;width:12px;height:12px;background:#fff;border:1px solid #000"></div>
<svg class="a" style="left:84px;top:339px" width="16" height="16" viewBox="0 0 16 16"><path d="M3.300 8.300c0-3.600 4.200-5 7.400-3" stroke="#727272" stroke-width="2.700" fill="none"/><path d="M9.300 1l5.200 4.600-6.500 2.200z" fill="#727272"/><path d="M12.700 8.700c0 3.600-4.200 5-7.400 3" stroke="#727272" stroke-width="2.700" fill="none"/><path d="M6.700 16l-5.200-4.600 6.500-2.200z" fill="#727272"/></svg>
<div class="t " style="left:105px;top:341px;">JEDEC File</div>
<div class="hl" style="left:0px;top:665px;width:324px;background:#fff"></div>
<div class="hl" style="left:0px;top:666px;width:324px;background:#404040"></div>
<div class="tab" style="left:3px;top:667px;width:57px;height:18px;line-height:18px">File List</div>
<div class="tab" style="left:60px;top:665px;width:59px;height:21px;background:#d4d0c8;line-height:24px">Process</div>
<div class="vl" style="left:327px;top:93px;height:594px;background:#808080"></div>
<div class="vl" style="left:328px;top:93px;height:594px;background:#404040"></div>
<div class="vl" style="left:1438px;top:93px;height:594px;background:#fff"></div>
<div class="hl" style="left:0px;top:687px;width:1440px;background:#fff"></div>
<div class="hl" style="left:0px;top:691px;width:1440px;background:#909090"></div>
<div class="hl" style="left:0px;top:692px;width:1440px;background:#606060"></div>
<div class="vl" style="left:329px;top:93px;height:594px;background:#fff"></div>
<div class="hl" style="left:329px;top:115px;width:1108px;background:#fff"></div>
<div class="vl" style="left:1437px;top:116px;height:570px;background:#404040"></div>
<div class="vl" style="left:1436px;top:116px;height:570px;background:#808080"></div>
<div class="hl" style="left:329px;top:685px;width:1109px;background:#404040"></div>
<div class="a" style="left:331px;top:96px;width:121px;height:19px;border:1px solid;border-color:#fff #404040 transparent #fff;border-bottom:none;box-shadow:inset -1px 0 0 #808080;border-radius:3px 3px 0 0"></div>
<div class="t " style="left:364px;top:99px;letter-spacing:-0.15px">Start Page</div>
<svg class="a" style="left:425px;top:99px" width="14" height="14" viewBox="0 0 14 14"><rect x="0.5" y="0.5" width="13" height="13" rx="2" fill="#c4c1ba" stroke="#a8a59e"/><path d="M4.300 4.300l5.400 5.400M9.700 4.300l-5.400 5.400" stroke="#f0efec" stroke-width="1.900" stroke-linecap="round"/></svg>
<div class="a" style="left:453px;top:96px;width:109px;height:19px;border:1px solid;border-color:#fff #404040 transparent #fff;border-bottom:none;box-shadow:inset -1px 0 0 #808080;border-radius:3px 3px 0 0"></div>
<div class="t " style="left:487px;top:99px;letter-spacing:-0.15px">Reports</div>
<svg class="a" style="left:534px;top:99px" width="14" height="14" viewBox="0 0 14 14"><rect x="0.5" y="0.5" width="13" height="13" rx="2" fill="#c4c1ba" stroke="#a8a59e"/><path d="M4.300 4.300l5.400 5.400M9.700 4.300l-5.400 5.400" stroke="#f0efec" stroke-width="1.900" stroke-linecap="round"/></svg>
<div class="a" style="left:563px;top:96px;width:157px;height:19px;border:1px solid;border-color:#fff #404040 transparent #fff;border-bottom:none;box-shadow:inset -1px 0 0 #808080;border-radius:3px 3px 0 0"></div>
<div class="t " style="left:600px;top:99px;letter-spacing:-0.15px">blinking_led.vhd</div>
<svg class="a" style="left:690px;top:99px" width="14" height="14" viewBox="0 0 14 14"><rect x="0.5" y="0.5" width="13" height="13" rx="2" fill="#c4c1ba" stroke="#a8a59e"/><path d="M4.300 4.300l5.400 5.400M9.700 4.300l-5.400 5.400" stroke="#f0efec" stroke-width="1.900" stroke-linecap="round"/></svg>
<div class="a" style="left:718px;top:94px;width:174px;height:23px;background:#d4d0c8;border:1px solid;border-color:#fff #404040 transparent #fff;border-bottom:none;box-shadow:inset -1px 0 0 #808080;border-radius:3px 3px 0 0"></div>
<div class="t b" style="left:750px;top:98px;font-size:11.5px;letter-spacing:0.2px">Spreadsheet View *</div>
<svg class="a" style="left:865px;top:98px" width="14" height="14" viewBox="0 0 14 14"><rect x="0.5" y="0.5" width="13" height="13" rx="2" fill="#e87858" stroke="#c05030"/><rect x="1.5" y="1.5" width="11" height="5" rx="1.5" fill="#f09878" opacity=".8"/><path d="M4.300 4.300l5.400 5.400M9.700 4.300l-5.400 5.400" stroke="#fff4ec" stroke-width="1.900" stroke-linecap="round"/></svg>
<svg class="a" style="left:341px;top:96px" width="18" height="18" viewBox="0 0 18 18" ><circle cx="6.500" cy="7.500" r="6" fill="#5aa0e0" stroke="#2a6cb8"/><path d="M3 4c2-2 5-2 6 0s-2 4-1 7c-3 1-6-3-5-7z" fill="#a8d4f4"/><path d="M7.500 5.500h6l3 3v8h-9z" fill="#f8f0cc" stroke="#a89858"/><path d="M9.500 9h3M9.500 11h5M9.500 13.500h5" stroke="#b09848" stroke-width="1.200"/></svg>
<svg class="a" style="left:465px;top:96px" width="17" height="18" viewBox="0 0 17 18" ><rect x="0.500" y="1.500" width="15" height="15" fill="#fff" stroke="#303840"/><rect x="1" y="2" width="14" height="3" fill="#5ab0ee"/><path d="M3 7h3M4 7v7.500h3M4 10.500h3" stroke="#000" fill="none"/><path d="M8 7.500h6M8 10.500h6" stroke="#000" stroke-width="1.500" stroke-dasharray="2 1"/><path d="M8 14.500h6" stroke="#000" stroke-width="1.500"/></svg>
<svg class="a" style="left:574px;top:96px" width="17" height="18" viewBox="0 0 17 18" ><rect x="1.500" y="2.500" width="11" height="14" fill="#e8f4fc" stroke="#88a8c8"/><path d="M3.500 6h5M3.500 8.500h4M3.500 11h3M3.500 13.500h7" stroke="#5a98d0" stroke-width="1.200"/><path d="M6 12l1-3 7-7 2 2-7 7z" fill="#f0b848" stroke="#a86818" stroke-width=".9"/><path d="M6 12l1-3 2 2z" fill="#f8e8c0"/></svg>
<svg class="a" style="left:730px;top:95px" width="17" height="18" viewBox="0 0 17 18" ><path d="M5.7 2.4L8.6 6.3L13.4 6.1L10.6 10L12.2 14.5L7.600 13L3.800 16L3.800 11.200L0.300 8.500L4.400 7z" fill="#a4dc84" stroke="#4aa838" stroke-width="1.100" stroke-linejoin="round"/><path d="M6.300 11.300l.9-2.800 6.800-7 2 2-6.800 7z" fill="#f0c040" stroke="#b07818" stroke-width=".9"/><path d="M6.300 11.300l.9-2.800 1.900 1.900z" fill="#f8ecc8"/><path d="M8.500 7.800l5.800-6" stroke="#fbe8a0" stroke-width=".9"/></svg>
<div class="a raised" style="left:1405px;top:99px;width:16px;height:16px"><svg class="a" style="left:2px;top:1px" width="10" height="10" viewBox="0 0 10 10" shape-rendering="crispEdges"><path d="M3 0h6v6h-2v-1h1v-3h-4v1h-1z M0 3h7v6h-7z M1 5v3h5v-3z" fill="#000" fill-rule="evenodd"/></svg></div>
<div class="a raised" style="left:1423px;top:99px;width:16px;height:16px"><svg class="a" style="left:3px;top:2px" width="9" height="9" viewBox="0 0 9 9"><path d="M0.8 0.8l7 7M7.8 0.8l-7 7" stroke="#000" stroke-width="1.7" fill="none"/></svg></div>
<div class="vl" style="left:331px;top:118px;height:546px;background:#fff"></div>
<div class="hl" style="left:336px;top:120px;width:18px;background:#fff"></div>
<div class="hl" style="left:336px;top:121px;width:18px;background:#808080"></div>
<div class="hl" style="left:336px;top:123px;width:18px;background:#fff"></div>
<div class="hl" style="left:336px;top:124px;width:18px;background:#808080"></div>
<div class="hl" style="left:335px;top:242px;width:19px;background:#808080"></div>
<div class="hl" style="left:335px;top:243px;width:19px;background:#fff"></div>
<div class="hl" style="left:335px;top:292px;width:19px;background:#808080"></div>
<div class="hl" style="left:335px;top:293px;width:19px;background:#fff"></div>
<div class="hl" style="left:335px;top:364px;width:19px;background:#808080"></div>
<div class="hl" style="left:335px;top:365px;width:19px;background:#fff"></div>
<svg class="a" style="left:335px;top:132px" width="17" height="17" viewBox="0 0 17 17" ><circle cx="1.500" cy="9" r="1" fill="#400"/><circle cx="14" cy="6" r="1" fill="#400"/><circle cx="14.500" cy="12" r="1" fill="#400"/><circle cx="3" cy="14.500" r="1" fill="#400"/><circle cx="7.500" cy="9.500" r="5.500" fill="#fff" stroke="#c81420" stroke-width="2.400"/><path d="M3.700 5.700l7.600 7.600" stroke="#c81420" stroke-width="2.400"/><circle cx="14" cy="2.500" r="2" fill="#fff" stroke="#d04848" stroke-width=".9"/><path d="M14 1.300v1.400" stroke="#d04848" stroke-width=".8"/></svg>
<svg class="a" style="left:335px;top:154px" width="17" height="17" viewBox="0 0 17 17" ><rect x="0" y="12" width="17" height="4" fill="#c8f0c8"/><path d="M1 13.500h2.500v-8h4v8h3v-8h4v8h2" stroke="#28b030" stroke-width="1.800" fill="none"/><circle cx="14" cy="2.500" r="2" fill="#fff" stroke="#d04848" stroke-width=".9"/><path d="M14 1.300v1.400" stroke="#d04848" stroke-width=".8"/></svg>
<svg class="a" style="left:335px;top:176px" width="17" height="17" viewBox="0 0 17 17" ><rect x="0" y="9" width="17" height="5" fill="#c8e8f0"/><path d="M0 8h4M12 8h5M8 12v3M1 14.500h15" stroke="#f0a050" stroke-width="1.500"/><path d="M0 14.500h8v-3" stroke="#58c858" stroke-width="1.300" fill="none"/><circle cx="8" cy="8" r="3.800" fill="#fbe8c8" stroke="#f09038" stroke-width="1.500"/><circle cx="14" cy="2.500" r="2" fill="#fff" stroke="#d04848" stroke-width=".9"/><path d="M14 1.300v1.400" stroke="#d04848" stroke-width=".8"/></svg>
<svg class="a" style="left:335px;top:198px" width="17" height="17" viewBox="0 0 17 17" ><rect x="0" y="13" width="17" height="3.500" fill="#c8f0d8"/><path d="M1.500 14v-9M3.500 14v-9M5.500 14v-9M7.500 14v-9" stroke="#28b030" stroke-width="1.300"/><path d="M0.500 5h8" stroke="#28b030"/><text x="12.500" y="13" font-family="Liberation Sans,sans-serif" font-weight="bold" font-size="8" fill="#000" text-anchor="middle">x2</text><circle cx="14" cy="2.500" r="2" fill="#fff" stroke="#d04848" stroke-width=".9"/><path d="M14 1.300v1.400" stroke="#d04848" stroke-width=".8"/></svg>
<svg class="a" style="left:335px;top:220px" width="17" height="18" viewBox="0 0 17 18" ><path d="M3 6.500h11M3 5v3M14 5v3" stroke="#202020" stroke-width="1.500"/><rect x="0" y="13" width="17" height="4" fill="#c8e0f0"/><path d="M0 12h4M12 12h5M6 15.500v2M10 15.500v2" stroke="#f0a050" stroke-width="1.400"/><circle cx="8" cy="12" r="3.800" fill="#fbe8c8" stroke="#f09038" stroke-width="1.500"/><circle cx="14" cy="2.500" r="2" fill="#fff" stroke="#d04848" stroke-width=".9"/><path d="M14 1.300v1.400" stroke="#d04848" stroke-width=".8"/></svg>
<svg class="a" style="left:336px;top:248px" width="17" height="18" viewBox="0 0 17 18" ><path d="M4.500 8.500h5l1 1.500h6v7.500h-12z" fill="#f8d048" stroke="#b88818"/><rect x="0.500" y="0.500" width="4" height="4" fill="#fff" stroke="#808080" stroke-dasharray="1 1"/><path d="M4 4l6 6M10 6v4.500h-4.500" stroke="#000" stroke-width="1.500" fill="none"/></svg>
<svg class="a" style="left:336px;top:271px" width="17" height="16" viewBox="0 0 17 16" ><rect x="0" y="0" width="17" height="16" fill="#2a3f9a"/><rect x="0" y="0" width="17" height="7" fill="#c83838"/><path d="M0 4l2-2 2 3 2-3 2 3 2-3 2 3 2-3 2 2" stroke="#f8a0a0" stroke-width="1" fill="none"/><text x="8.500" y="13.500" font-family="Liberation Sans,sans-serif" font-weight="bold" font-style="italic" font-size="7.500" fill="#fff" text-anchor="middle">Vref</text></svg>
<svg class="a" style="left:336px;top:297px" width="17" height="17" viewBox="0 0 17 17" ><path d="M3.500 1v15M13.500 1v15M3.500 4.500h7v8h-7" stroke="#a29e96" stroke-width="1.500" fill="#e6e3dc"/><path d="M16 8.500h-9M9.500 6l-3 2.500 3 2.500" stroke="#a29e96" stroke-width="1.500" fill="none"/></svg>
<svg class="a" style="left:336px;top:320px" width="18" height="15" viewBox="0 0 18 15" ><rect x="1" y="2" width="9" height="5" fill="#6aa8e8"/><path d="M1 8l4 5h-4z" fill="#f0b030"/><path d="M1 8.500h6" stroke="#f0b030" stroke-width="2"/><path d="M10.500 2.5l6 10.5h-12z" fill="#fff" stroke="#d02020" stroke-width="1.600" stroke-linejoin="round"/><path d="M10.500 6.5v3.5M10.500 11v1.200" stroke="#a01010" stroke-width="1.500"/></svg>
<svg class="a" style="left:336px;top:342px" width="18" height="18" viewBox="0 0 18 18" ><path d="M2 1v16M4.500 1v16M7 1v16M9.500 1v16" stroke="#803010" stroke-width="1.300"/><rect x="0.500" y="3" width="12" height="12" fill="#f08030" stroke="#a03810"/><rect x="2" y="4.500" width="7" height="6" fill="#f8c040"/><path d="M10.500 4.5l6 10.5h-12z" fill="#fff" stroke="#d02020" stroke-width="1.600" stroke-linejoin="round"/><path d="M10.500 8.5v3.5M10.500 13v1.200" stroke="#a01010" stroke-width="1.500"/></svg>
<svg class="a" style="left:336px;top:369px" width="18" height="18" viewBox="0 0 18 18" ><path d="M8.500 1.500h6l3 3v12h-9z" fill="#c8e0f8" stroke="#5888c0"/><text x="4.500" y="8" font-family="Liberation Sans,sans-serif" font-weight="bold" font-size="9" fill="#000" text-anchor="middle">A</text><text x="4.500" y="16.500" font-family="Liberation Sans,sans-serif" font-weight="bold" font-size="9" fill="#000" text-anchor="middle">Z</text><path d="M11.500 4v8M9 9.500l2.500 3 2.500-3" stroke="#000" stroke-width="1.400" fill="none"/></svg>
<svg class="a" style="left:336px;top:392px" width="17" height="17" viewBox="0 0 17 17" ><rect x="0.500" y="0.500" width="16" height="16" fill="#f8e0f0" stroke="#d890c0"/><rect x="1" y="10" width="15" height="6.500" fill="#e8a0d0"/><path d="M4 12l8-9 2 2-8 8z" fill="#d848a8"/><path d="M11 2l1 2 2 1-2 1-1 2-1-2-2-1 2-1z" fill="#f8f8f8" stroke="#d848a8" stroke-width=".5"/></svg>
<svg class="a" style="left:336px;top:414px" width="17" height="17" viewBox="0 0 17 17" ><rect x="0" y="0" width="17" height="17" fill="#3890d0"/><path d="M0 0h4v4h-4z M8 0h4v4h-4z M4 9h4v4h-4z M13 9h4v4h-4z M0 13h4v4h-4z M9 13h4v4h-4z" fill="#102030"/><path d="M8.500 6l4 2.500-4 2.500z M4 6l4 2.500-4 2.500z" fill="#000"/><circle cx="6" cy="2.500" r="2.300" fill="#e02020"/><circle cx="14" cy="2.500" r="2.300" fill="#e02020"/><circle cx="2.500" cy="10.500" r="2.300" fill="#e02020"/><circle cx="11" cy="14.500" r="2.300" fill="#e02020"/><circle cx="14.500" cy="8" r="1.800" fill="#e02020"/></svg>
<svg class="a" style="left:336px;top:436px" width="17" height="17" viewBox="0 0 17 17" ><rect x="0" y="0" width="17" height="17" fill="#3890d0"/><path d="M0 0h4v4h-4z M8 0h4v4h-4z M4 9h4v4h-4z M13 9h4v4h-4z M0 13h4v4h-4z M9 13h4v4h-4z" fill="#102030"/><path d="M8.500 6l4 2.500-4 2.500z M4 6l4 2.500-4 2.500z" fill="#000"/><path d="M4 0h4v4h-4z M12 0h4v3h-4z M0 5h3v4h-3z M9 5h3v3h-3z M5 13h3v4h-3z M13 13h4v4h-4z" fill="#f0f8ff"/></svg>
<div class="vl" style="left:357px;top:118px;height:546px;background:#808080"></div>
<div class="vl" style="left:358px;top:118px;height:546px;background:#fff"></div>
<div class="a " style="left:360px;top:119px;width:1076px;height:545px;border:1px solid;border-color:#808080 #fff #fff #808080;box-shadow:inset 1px 1px 0 #404040"></div>
<div class="a" style="left:362px;top:121px;width:1056px;height:541px;overflow:hidden">
<div class="hdr" style="left:0px;top:0px;width:29px;"></div>
<div class="hdr dith" style="left:29px;top:0px;width:100px;font-weight:bold">Pin</div>
<div class="hdr dith" style="left:129px;top:0px;width:100px;font-weight:bold">Pad Name</div>
<div class="hdr dith" style="left:229px;top:0px;width:100px;font-weight:bold">Bank</div>
<div class="hdr dith" style="left:329px;top:0px;width:100px;font-weight:bold">Dual Function</div>
<div class="hdr dith" style="left:429px;top:0px;width:100px;font-weight:bold">Polarity</div>
<div class="hdr" style="left:529px;top:0px;width:100px;font-size:11px;letter-spacing:-0.3px">Bank_VCCIO</div>
<div class="hdr" style="left:629px;top:0px;width:100px;font-size:11px;letter-spacing:-0.3px">IO_TYPE</div>
<div class="hdr dith" style="left:729px;top:0px;width:100px;font-weight:bold">Signal Name</div>
<div class="hdr" style="left:829px;top:0px;width:100px;font-size:11px;letter-spacing:-0.3px">Signal Type</div>
<div class="cell" style="left:0px;top:21px;width:29px;text-align:center;padding-left:0;font-size:11px">76</div>
<div class="cell" style="left:29px;top:21px;width:100px;">99</div>
<div class="cell" style="left:129px;top:21px;width:100px;">FIO:PR3B</div>
<div class="cell" style="left:229px;top:21px;width:100px;">1</div>
<div class="cell" style="left:329px;top:21px;width:100px;"></div>
<div class="cell" style="left:429px;top:21px;width:100px;">N</div>
<div class="wc" style="left:529px;top:21px;width:100px;">Auto</div>
<div class="wc" style="left:629px;top:21px;width:100px;"></div>
<div class="wc" style="left:729px;top:21px;width:100px;"></div>
<div class="wc" style="left:829px;top:21px;width:100px;"></div>
<div class="cell" style="left:0px;top:42px;width:29px;text-align:center;padding-left:0;font-size:11px">77</div>
<div class="cell" style="left:29px;top:42px;width:100px;">100</div>
<div class="cell" style="left:129px;top:42px;width:100px;">FIO:PR3A</div>
<div class="cell" style="left:229px;top:42px;width:100px;">1</div>
<div class="cell" style="left:329px;top:42px;width:100px;"></div>
<div class="cell" style="left:429px;top:42px;width:100px;">P</div>
<div class="wc" style="left:529px;top:42px;width:100px;">Auto</div>
<div class="wc" style="left:629px;top:42px;width:100px;"></div>
<div class="wc" style="left:729px;top:42px;width:100px;"></div>
<div class="wc" style="left:829px;top:42px;width:100px;"></div>
<div class="cell" style="left:0px;top:63px;width:29px;text-align:center;padding-left:0;font-size:11px">78</div>
<div class="cell" style="left:29px;top:63px;width:100px;">104</div>
<div class="cell" style="left:129px;top:63px;width:100px;">FIO:PR2D</div>
<div class="cell" style="left:229px;top:63px;width:100px;">1</div>
<div class="cell" style="left:329px;top:63px;width:100px;"></div>
<div class="cell" style="left:429px;top:63px;width:100px;">N</div>
<div class="wc" style="left:529px;top:63px;width:100px;">Auto</div>
<div class="wc" style="left:629px;top:63px;width:100px;"></div>
<div class="wc" style="left:729px;top:63px;width:100px;"></div>
<div class="wc" style="left:829px;top:63px;width:100px;"></div>
<div class="cell" style="left:0px;top:84px;width:29px;text-align:center;padding-left:0;font-size:11px">79</div>
<div class="cell" style="left:29px;top:84px;width:100px;">105</div>
<div class="cell" style="left:129px;top:84px;width:100px;">FIO:PR2C</div>
<div class="cell" style="left:229px;top:84px;width:100px;">1</div>
<div class="cell" style="left:329px;top:84px;width:100px;"></div>
<div class="cell" style="left:429px;top:84px;width:100px;">P</div>
<div class="wc" style="left:529px;top:84px;width:100px;">Auto</div>
<div class="wc" style="left:629px;top:84px;width:100px;"></div>
<div class="wc" style="left:729px;top:84px;width:100px;"></div>
<div class="wc" style="left:829px;top:84px;width:100px;"></div>
<div class="cell" style="left:0px;top:105px;width:29px;text-align:center;padding-left:0;font-size:11px">80</div>
<div class="cell" style="left:29px;top:105px;width:100px;">106</div>
<div class="cell" style="left:129px;top:105px;width:100px;">FIO:PR2B</div>
<div class="cell" style="left:229px;top:105px;width:100px;">1</div>
<div class="cell" style="left:329px;top:105px;width:100px;"></div>
<div class="cell" style="left:429px;top:105px;width:100px;">N</div>
<div class="wc" style="left:529px;top:105px;width:100px;">Auto</div>
<div class="wc" style="left:629px;top:105px;width:100px;"></div>
<div class="wc" style="left:729px;top:105px;width:100px;"></div>
<div class="wc" style="left:829px;top:105px;width:100px;"></div>
<div class="cell dith" style="left:0px;top:126px;width:29px;text-align:center;padding-left:0;font-weight:bold;border-color:#404040 #404040 #fff #404040;box-shadow:none">81</div>
<div class="cell" style="left:29px;top:126px;width:100px;font-weight:bold;background:#fff;border-color:#404040 #fff #fff #404040;box-shadow:inset -1px -1px 0 #d4d0c8">107</div>
<div class="cell" style="left:129px;top:126px;width:100px;font-weight:bold;background:#fff;border-color:#404040 #fff #fff #404040;box-shadow:inset -1px -1px 0 #d4d0c8">FIO:PR2A</div>
<div class="cell" style="left:229px;top:126px;width:100px;font-weight:bold;background:#fff;border-color:#404040 #fff #fff #404040;box-shadow:inset -1px -1px 0 #d4d0c8">1</div>
<div class="cell" style="left:329px;top:126px;width:100px;font-weight:bold;background:#fff;border-color:#404040 #fff #fff #404040;box-shadow:inset -1px -1px 0 #d4d0c8"></div>
<div class="cell" style="left:429px;top:126px;width:100px;font-weight:bold;background:#fff;border-color:#404040 #fff #fff #404040;box-shadow:inset -1px -1px 0 #d4d0c8">P</div>
<div class="wc" style="left:529px;top:126px;width:100px;">Auto</div>
<div class="wc" style="left:629px;top:126px;width:100px;">LVCMOS25</div>
<div class="wc" style="left:729px;top:126px;width:100px;background:#0a246a;color:#fff;outline:1px dotted #d4d0c8;outline-offset:-1px">led</div>
<div class="wc" style="left:829px;top:126px;width:100px;color:#000;padding-left:25px">Output Port<svg class="a" style="left:4px;top:5px" width="14" height="10" viewBox="0 0 14 10"><path d="M4 0.5h9.5v9h-9.500l-3.500-4.500z" fill="#f0e050" stroke="#b8a838"/></svg></div>
<div class="cell" style="left:0px;top:147px;width:29px;text-align:center;padding-left:0;font-size:11px">82</div>
<div class="cell" style="left:29px;top:147px;width:100px;">109</div>
<div class="cell" style="left:129px;top:147px;width:100px;">FIO:PT17D</div>
<div class="cell" style="left:229px;top:147px;width:100px;">0</div>
<div class="cell" style="left:329px;top:147px;width:100px;">DONE</div>
<div class="cell" style="left:429px;top:147px;width:100px;">N</div>
<div class="wc" style="left:529px;top:147px;width:100px;">Auto</div>
<div class="wc" style="left:629px;top:147px;width:100px;"></div>
<div class="wc" style="left:729px;top:147px;width:100px;"></div>
<div class="wc" style="left:829px;top:147px;width:100px;"></div>
<div class="cell" style="left:0px;top:168px;width:29px;text-align:center;padding-left:0;font-size:11px">83</div>
<div class="cell" style="left:29px;top:168px;width:100px;">110</div>
<div class="cell" style="left:129px;top:168px;width:100px;">FIO:PT17C</div>
<div class="cell" style="left:229px;top:168px;width:100px;">0</div>
<div class="cell" style="left:329px;top:168px;width:100px;">INITN</div>
<div class="cell" style="left:429px;top:168px;width:100px;">P</div>
<div class="wc" style="left:529px;top:168px;width:100px;">Auto</div>
<div class="wc" style="left:629px;top:168px;width:100px;"></div>
<div class="wc" style="left:729px;top:168px;width:100px;"></div>
<div class="wc" style="left:829px;top:168px;width:100px;"></div>
<div class="cell" style="left:0px;top:189px;width:29px;text-align:center;padding-left:0;font-size:11px">84</div>
<div class="cell" style="left:29px;top:189px;width:100px;">111</div>
<div class="cell" style="left:129px;top:189px;width:100px;">FIO:PT17B</div>
<div class="cell" style="left:229px;top:189px;width:100px;">0</div>
<div class="cell" style="left:329px;top:189px;width:100px;"></div>
<div class="cell" style="left:429px;top:189px;width:100px;">N</div>
<div class="wc" style="left:529px;top:189px;width:100px;">Auto</div>
<div class="wc" style="left:629px;top:189px;width:100px;"></div>
<div class="wc" style="left:729px;top:189px;width:100px;"></div>
<div class="wc" style="left:829px;top:189px;width:100px;"></div>
<div class="cell" style="left:0px;top:210px;width:29px;text-align:center;padding-left:0;font-size:11px">85</div>
<div class="cell" style="left:29px;top:210px;width:100px;">112</div>
<div class="cell" style="left:129px;top:210px;width:100px;">FIO:PT17A</div>
<div class="cell" style="left:229px;top:210px;width:100px;">0</div>
<div class="cell" style="left:329px;top:210px;width:100px;"></div>
<div class="cell" style="left:429px;top:210px;width:100px;">P</div>
<div class="wc" style="left:529px;top:210px;width:100px;">Auto</div>
<div class="wc" style="left:629px;top:210px;width:100px;"></div>
<div class="wc" style="left:729px;top:210px;width:100px;"></div>
<div class="wc" style="left:829px;top:210px;width:100px;"></div>
<div class="cell" style="left:0px;top:231px;width:29px;text-align:center;padding-left:0;font-size:11px">86</div>
<div class="cell" style="left:29px;top:231px;width:100px;">113</div>
<div class="cell" style="left:129px;top:231px;width:100px;">FIO:PT16D</div>
<div class="cell" style="left:229px;top:231px;width:100px;">0</div>
<div class="cell" style="left:329px;top:231px;width:100px;"></div>
<div class="cell" style="left:429px;top:231px;width:100px;">N</div>
<div class="wc" style="left:529px;top:231px;width:100px;">Auto</div>
<div class="wc" style="left:629px;top:231px;width:100px;"></div>
<div class="wc" style="left:729px;top:231px;width:100px;"></div>
<div class="wc" style="left:829px;top:231px;width:100px;"></div>
<div class="cell" style="left:0px;top:252px;width:29px;text-align:center;padding-left:0;font-size:11px">87</div>
<div class="cell" style="left:29px;top:252px;width:100px;">114</div>
<div class="cell" style="left:129px;top:252px;width:100px;">FIO:PT16C</div>
<div class="cell" style="left:229px;top:252px;width:100px;">0</div>
<div class="cell" style="left:329px;top:252px;width:100px;"></div>
<div class="cell" style="left:429px;top:252px;width:100px;">P</div>
<div class="wc" style="left:529px;top:252px;width:100px;">Auto</div>
<div class="wc" style="left:629px;top:252px;width:100px;"></div>
<div class="wc" style="left:729px;top:252px;width:100px;"></div>
<div class="wc" style="left:829px;top:252px;width:100px;"></div>
<div class="cell" style="left:0px;top:273px;width:29px;text-align:center;padding-left:0;font-size:11px">88</div>
<div class="cell" style="left:29px;top:273px;width:100px;">115</div>
<div class="cell" style="left:129px;top:273px;width:100px;">FIO:PT16B</div>
<div class="cell" style="left:229px;top:273px;width:100px;">0</div>
<div class="cell" style="left:329px;top:273px;width:100px;"></div>
<div class="cell" style="left:429px;top:273px;width:100px;">N</div>
<div class="wc" style="left:529px;top:273px;width:100px;">Auto</div>
<div class="wc" style="left:629px;top:273px;width:100px;"></div>
<div class="wc" style="left:729px;top:273px;width:100px;"></div>
<div class="wc" style="left:829px;top:273px;width:100px;"></div>
<div class="cell" style="left:0px;top:294px;width:29px;text-align:center;padding-left:0;font-size:11px">89</div>
<div class="cell" style="left:29px;top:294px;width:100px;">117</div>
<div class="cell" style="left:129px;top:294px;width:100px;">FIO:PT16A</div>
<div class="cell" style="left:229px;top:294px;width:100px;">0</div>
<div class="cell" style="left:329px;top:294px;width:100px;"></div>
<div class="cell" style="left:429px;top:294px;width:100px;">P</div>
<div class="wc" style="left:529px;top:294px;width:100px;">Auto</div>
<div class="wc" style="left:629px;top:294px;width:100px;"></div>
<div class="wc" style="left:729px;top:294px;width:100px;"></div>
<div class="wc" style="left:829px;top:294px;width:100px;"></div>
<div class="cell" style="left:0px;top:315px;width:29px;text-align:center;padding-left:0;font-size:11px">90</div>
<div class="cell" style="left:29px;top:315px;width:100px;">119</div>
<div class="cell" style="left:129px;top:315px;width:100px;">FIO:PT15D</div>
<div class="cell" style="left:229px;top:315px;width:100px;">0</div>
<div class="cell" style="left:329px;top:315px;width:100px;">PROGRAMN</div>
<div class="cell" style="left:429px;top:315px;width:100px;">N</div>
<div class="wc" style="left:529px;top:315px;width:100px;">Auto</div>
<div class="wc" style="left:629px;top:315px;width:100px;"></div>
<div class="wc" style="left:729px;top:315px;width:100px;"></div>
<div class="wc" style="left:829px;top:315px;width:100px;"></div>
<div class="cell" style="left:0px;top:336px;width:29px;text-align:center;padding-left:0;font-size:11px">91</div>
<div class="cell" style="left:29px;top:336px;width:100px;">120</div>
<div class="cell" style="left:129px;top:336px;width:100px;">FIO:PT15C</div>
<div class="cell" style="left:229px;top:336px;width:100px;">0</div>
<div class="cell" style="left:329px;top:336px;width:100px;">JTAGENB/MD...</div>
<div class="cell" style="left:429px;top:336px;width:100px;">P</div>
<div class="wc" style="left:529px;top:336px;width:100px;">Auto</div>
<div class="wc" style="left:629px;top:336px;width:100px;"></div>
<div class="wc" style="left:729px;top:336px;width:100px;"></div>
<div class="wc" style="left:829px;top:336px;width:100px;"></div>
<div class="cell" style="left:0px;top:357px;width:29px;text-align:center;padding-left:0;font-size:11px">92</div>
<div class="cell" style="left:29px;top:357px;width:100px;">121</div>
<div class="cell" style="left:129px;top:357px;width:100px;">FIO:PT15B</div>
<div class="cell" style="left:229px;top:357px;width:100px;">0</div>
<div class="cell" style="left:329px;top:357px;width:100px;"></div>
<div class="cell" style="left:429px;top:357px;width:100px;">N</div>
<div class="wc" style="left:529px;top:357px;width:100px;">Auto</div>
<div class="wc" style="left:629px;top:357px;width:100px;"></div>
<div class="wc" style="left:729px;top:357px;width:100px;"></div>
<div class="wc" style="left:829px;top:357px;width:100px;"></div>
<div class="cell" style="left:0px;top:378px;width:29px;text-align:center;padding-left:0;font-size:11px">93</div>
<div class="cell" style="left:29px;top:378px;width:100px;">122</div>
<div class="cell" style="left:129px;top:378px;width:100px;">FIO:PT15A</div>
<div class="cell" style="left:229px;top:378px;width:100px;">0</div>
<div class="cell" style="left:329px;top:378px;width:100px;"></div>
<div class="cell" style="left:429px;top:378px;width:100px;">P</div>
<div class="wc" style="left:529px;top:378px;width:100px;">Auto</div>
<div class="wc" style="left:629px;top:378px;width:100px;"></div>
<div class="wc" style="left:729px;top:378px;width:100px;"></div>
<div class="wc" style="left:829px;top:378px;width:100px;"></div>
<div class="cell" style="left:0px;top:399px;width:29px;text-align:center;padding-left:0;font-size:11px">94</div>
<div class="cell" style="left:29px;top:399px;width:100px;">125</div>
<div class="cell" style="left:129px;top:399px;width:100px;">FIO:PT12D</div>
<div class="cell" style="left:229px;top:399px;width:100px;">0</div>
<div class="cell" style="left:329px;top:399px;width:100px;">SDA/IO3/MD3/...</div>
<div class="cell" style="left:429px;top:399px;width:100px;">N</div>
<div class="wc" style="left:529px;top:399px;width:100px;">Auto</div>
<div class="wc" style="left:629px;top:399px;width:100px;"></div>
<div class="wc" style="left:729px;top:399px;width:100px;"></div>
<div class="wc" style="left:829px;top:399px;width:100px;"></div>
<div class="cell" style="left:0px;top:420px;width:29px;text-align:center;padding-left:0;font-size:11px">95</div>
<div class="cell" style="left:29px;top:420px;width:100px;">126</div>
<div class="cell" style="left:129px;top:420px;width:100px;">FIO:PT12C</div>
<div class="cell" style="left:229px;top:420px;width:100px;">0</div>
<div class="cell" style="left:329px;top:420px;width:100px;">SCL/IO2/MD2/...</div>
<div class="cell" style="left:429px;top:420px;width:100px;">P</div>
<div class="wc" style="left:529px;top:420px;width:100px;">Auto</div>
<div class="wc" style="left:629px;top:420px;width:100px;"></div>
<div class="wc" style="left:729px;top:420px;width:100px;"></div>
<div class="wc" style="left:829px;top:420px;width:100px;"></div>
<div class="cell" style="left:0px;top:441px;width:29px;text-align:center;padding-left:0;font-size:11px">96</div>
<div class="cell" style="left:29px;top:441px;width:100px;">127</div>
<div class="cell" style="left:129px;top:441px;width:100px;">FIO:PT12B</div>
<div class="cell" style="left:229px;top:441px;width:100px;">0</div>
<div class="cell" style="left:329px;top:441px;width:100px;">PCLKC0_1</div>
<div class="cell" style="left:429px;top:441px;width:100px;">N</div>
<div class="wc" style="left:529px;top:441px;width:100px;">Auto</div>
<div class="wc" style="left:629px;top:441px;width:100px;"></div>
<div class="wc" style="left:729px;top:441px;width:100px;"></div>
<div class="wc" style="left:829px;top:441px;width:100px;"></div>
<div class="cell" style="left:0px;top:462px;width:29px;text-align:center;padding-left:0;font-size:11px">97</div>
<div class="cell" style="left:29px;top:462px;width:100px;">128</div>
<div class="cell" style="left:129px;top:462px;width:100px;">FIO:PT12A</div>
<div class="cell" style="left:229px;top:462px;width:100px;">0</div>
<div class="cell" style="left:329px;top:462px;width:100px;">PCLKT0_1</div>
<div class="cell" style="left:429px;top:462px;width:100px;">P</div>
<div class="wc" style="left:529px;top:462px;width:100px;">Auto</div>
<div class="wc" style="left:629px;top:462px;width:100px;"></div>
<div class="wc" style="left:729px;top:462px;width:100px;"></div>
<div class="wc" style="left:829px;top:462px;width:100px;"></div>
<div class="cell" style="left:0px;top:483px;width:29px;text-align:center;padding-left:0;font-size:11px">98</div>
<div class="cell" style="left:29px;top:483px;width:100px;">130</div>
<div class="cell" style="left:129px;top:483px;width:100px;">FIO:TMS</div>
<div class="cell" style="left:229px;top:483px;width:100px;">0</div>
<div class="cell" style="left:329px;top:483px;width:100px;">TMS</div>
<div class="cell" style="left:429px;top:483px;width:100px;">N</div>
<div class="wc" style="left:529px;top:483px;width:100px;">N/A</div>
<div class="wc" style="left:629px;top:483px;width:100px;">N/A</div>
<div class="wc" style="left:729px;top:483px;width:100px;">N/A</div>
<div class="wc" style="left:829px;top:483px;width:100px;">N/A</div>
<div class="cell" style="left:0px;top:504px;width:29px;text-align:center;padding-left:0;font-size:11px">99</div>
<div class="cell" style="left:29px;top:504px;width:100px;">131</div>
<div class="cell" style="left:129px;top:504px;width:100px;">FIO:TCK/TEST...</div>
<div class="cell" style="left:229px;top:504px;width:100px;">0</div>
<div class="cell" style="left:329px;top:504px;width:100px;">TCK/TEST_CLK</div>
<div class="cell" style="left:429px;top:504px;width:100px;">P</div>
<div class="wc" style="left:529px;top:504px;width:100px;">N/A</div>
<div class="wc" style="left:629px;top:504px;width:100px;">N/A</div>
<div class="wc" style="left:729px;top:504px;width:100px;">N/A</div>
<div class="wc" style="left:829px;top:504px;width:100px;">N/A</div>
<div class="cell" style="left:0px;top:525px;width:29px;text-align:center;padding-left:0;font-size:11px">100</div>
<div class="cell" style="left:29px;top:525px;width:100px;">132</div>
<div class="cell" style="left:129px;top:525px;width:100px;">FIO:PT11B</div>
<div class="cell" style="left:229px;top:525px;width:100px;">0</div>
<div class="cell" style="left:329px;top:525px;width:100px;"></div>
<div class="cell" style="left:429px;top:525px;width:100px;">N</div>
<div class="wc" style="left:529px;top:525px;width:100px;">Auto</div>
<div class="wc" style="left:629px;top:525px;width:100px;"></div>
<div class="wc" style="left:729px;top:525px;width:100px;"></div>
<div class="wc" style="left:829px;top:525px;width:100px;"></div>
</div>
<div class="vl" style="left:890px;top:142px;height:520px;background:#808080"></div>
<div class="a dith" style="left:1418px;top:121px;width:16px;height:541px;"></div>
<div class="a raised" style="left:1418px;top:121px;width:16px;height:16px"><svg class="a" style="left:3px;top:4px" width="8" height="5" viewBox="0 0 8 5"><path d="M0 4.5h7.500l-3.750-4z" fill="#000"/></svg></div>
<div class="a raised" style="left:1418px;top:646px;width:16px;height:16px"><svg class="a" style="left:3px;top:5px" width="8" height="5" viewBox="0 0 8 5"><path d="M0 0.500h7.500l-3.750 4z" fill="#000"/></svg></div>
<div class="a raised" style="left:1418px;top:487px;width:16px;height:112px"></div>
<div class="hl" style="left:361px;top:664px;width:1075px;background:#404040"></div>
<div class="tab" style="left:361px;top:665px;width:104px;height:18px;line-height:18px">Port Assignments</div>
<div class="tab" style="left:467px;top:663px;width:98px;height:22px;background:#d4d0c8;line-height:24px">Pin Assignments</div>
<div class="tab" style="left:566px;top:665px;width:96px;height:18px;line-height:18px">Clock Resource</div>
<div class="tab" style="left:664px;top:665px;width:88px;height:18px;line-height:18px">Route Priority</div>
<div class="tab" style="left:754px;top:665px;width:82px;height:18px;line-height:18px">Cell Mapping</div>
<div class="tab" style="left:838px;top:665px;width:112px;height:18px;line-height:18px">Global Preferences</div>
<div class="tab" style="left:952px;top:665px;width:113px;height:18px;line-height:18px">Timing Preferences</div>
<div class="tab" style="left:1068px;top:665px;width:50px;height:18px;line-height:18px">Group</div>
<div class="tab" style="left:1120px;top:665px;width:102px;height:18px;line-height:18px">Misc Preferences</div>
<div class="hl" style="left:0px;top:693px;width:1440px;background:#fff"></div>
<div class="t " style="left:1px;top:696px;">Output</div>
<svg class="a" style="left:1413px;top:697px" width="26" height="10" viewBox="0 0 26 10" shape-rendering="crispEdges"><path d="M2 0h6v6h-2v-1h1v-3h-4v1h-1z M0 3h6v6h-6z M1 5v3h4v-3z" fill="#000" fill-rule="evenodd"/><path d="M15.6 1.500l6.400 6.400M22 1.500l-6.400 6.400" stroke="#000" stroke-width="1.7" shape-rendering="auto" fill="none"/></svg>
<div class="a " style="left:0px;top:712px;width:1440px;height:118px;background:#fff;border:1px solid;border-color:#808080 #fff #fff #808080;box-shadow:inset 1px 1px 0 #404040"></div>
<div class="mono" style="left:6px;top:717px">     53 blocks expanded</div>
<div class="mono" style="left:6px;top:732px">complete the first expansion</div>
<div class="mono" style="left:6px;top:747px">Writing &#x27;machxo2_blinking_led_machxo2_blinking_led.ngd&#x27; ...</div>
<div class="mono" style="left:6px;top:762px"></div>
<div class="mono" style="left:6px;top:777px">Done: completed successfully</div>
<div class="mono" style="left:6px;top:792px">Loading logical design information</div>
<div class="mono" style="left:6px;top:807px">Finish loading logical design information</div>
<div class="a dith" style="left:1422px;top:714px;width:16px;height:114px;"></div>
<div class="a raised" style="left:1422px;top:714px;width:16px;height:16px"><svg class="a" style="left:3px;top:4px" width="8" height="5" viewBox="0 0 8 5"><path d="M0 4.5h7.500l-3.750-4z" fill="#000"/></svg></div>
<div class="a raised" style="left:1422px;top:812px;width:16px;height:16px"><svg class="a" style="left:3px;top:5px" width="8" height="5" viewBox="0 0 8 5"><path d="M0 0.500h7.500l-3.750 4z" fill="#000"/></svg></div>
<div class="hl" style="left:0px;top:830px;width:1440px;background:#fff"></div>
<div class="hl" style="left:0px;top:831px;width:1440px;background:#404040"></div>
<div class="tab" style="left:3px;top:832px;width:75px;height:18px;line-height:18px">Tcl Console</div>
<div class="tab" style="left:78px;top:830px;width:57px;height:21px;background:#d4d0c8;line-height:23px">Output</div>
<div class="tab" style="left:135px;top:832px;width:48px;height:18px;line-height:18px">Error</div>
<div class="tab" style="left:184px;top:832px;width:67px;height:18px;line-height:18px">Warning*</div>
<div class="hl" style="left:0px;top:853px;width:1440px;background:#808080"></div>
<div class="t " style="left:1px;top:855px;">Ready</div>
<div class="a" style="left:1181px;top:854px;width:117px;height:15px;border:1px solid;border-color:#808080 #fff #fff #808080"></div>
<div class="t " style="left:1189px;top:855px;letter-spacing:-0.15px">Preferences Modified</div>
<div class="a" style="left:1302px;top:854px;width:134px;height:15px;border:1px solid;border-color:#808080 #fff #fff #808080"></div>
<div class="t " style="left:1313px;top:855px;white-space:pre;letter-spacing:-0.2px">Mem Usage:  134,400 K</div>
<div class="hl" style="left:0px;top:870px;width:1440px;background:#d4d0c8"></div>
<div class="hl" style="left:0px;top:871px;width:1440px;background:#fff"></div>
<div class="tbtn b" style="left:2px;width:52px;padding-left:19px;font-size:12px;letter-spacing:0">Start</div>
<svg class="a" style="left:4px;top:876px" width="15" height="15" viewBox="0 0 15 15" ><path d="M3 2c2-1 3.500-.5 5 .5l-1.500 5c-1.500-1-3-1.500-5-.5z" fill="#e8582c"/><path d="M8.800 3c1.500 1 3.200 1.200 5.200.2l-1.500 5c-2 1-3.700.8-5.200-.2z" fill="#78c030"/><path d="M1.200 8c2-1 3.500-.5 5 .5l-1.500 5c-1.500-1-3-1.500-5-.5z" fill="#4a80e0"/><path d="M7 9c1.500 1 3.200 1.200 5.200.2l-1.500 5c-2 1-3.700.8-5.200-.2z" fill="#f0c028"/></svg>
<svg class="a" style="left:62px;top:877px" width="16" height="16" viewBox="0 0 16 16" ><circle cx="8" cy="8.500" r="7.200" fill="#d8641c"/><circle cx="8.500" cy="7" r="5" fill="#2f4fa8"/><path d="M6 3.500c1.500-1 3.500-.8 4.500 0-1 .2-1.500 1-1 2-1.200.2-2 .8-2.500 1.800z" fill="#6a90d8"/><path d="M0.800 8.500c0-3 1.800-5.800 4.700-7-1 1.800-1 3 0 4 .8-.6 1.800-.8 2.800-.4-1.800 1-2.300 2.800-1 4.200 1.800 1.500 4.800.7 5.800-1.800.8 4-2 7.500-6 7.500s-6.300-3-6.300-6.500z" fill="#f08c24"/><path d="M1.500 5c.8-1.800 2.200-3 4-3.500-1 1.500-1.200 3-.5 4.500-1.500-.8-2.500-1-3.500-1z" fill="#f8c040"/><path d="M3 13c2 1.800 5.500 2 8 .5-2 2.500-6 2.500-8-.5z" fill="#b8400c"/></svg>
<svg class="a" style="left:85px;top:877px" width="16" height="16" viewBox="0 0 16 16" ><circle cx="8" cy="8" r="7.500" fill="#e8eef8" stroke="#3f68b8" stroke-width="1.200"/><path d="M1 8a7 7 0 0 1 7-7" stroke="#e88030" stroke-width="1.600" fill="none"/><path d="M15 8a7 7 0 0 1-7 7" stroke="#58a838" stroke-width="1.600" fill="none"/><circle cx="8" cy="8" r="4.800" fill="#fff" stroke="#88a8e0"/><path d="M6 5l5 3-5 3z" fill="#1a3fa8"/></svg>
<svg class="a" style="left:108px;top:877px" width="16" height="16" viewBox="0 0 16 16" ><path d="M1 4l11-3 3 9-11 5z" fill="#4a98e0" stroke="#1a5aa8"/><path d="M4 5l7-2 2 6-7 3z" fill="#e8f4fc"/><path d="M6 10l1-3 4-3 1 1-3 4z" fill="#2a6ab8"/></svg>
<div class="t b" style="left:138px;top:877px;font-size:12px;left:137px;top:874px">»</div>
<div class="tbtn" style="left:148px;width:160px;padding-left:23px;letter-spacing:-0.13px">Home - LOGIC - eewiki - ...</div>
<div class="tbtn" style="left:311px;width:160px;padding-left:23px;letter-spacing:0px">tab_to_space</div>
<div class="tbtn" style="left:474px;width:160px;padding-left:23px;letter-spacing:0.12px">machxo2_getting_starte...</div>
<div class="tbtn b dith" style="left:637px;width:160px;padding-left:24px;border-color:#404040 #fff #fff #404040;box-shadow:inset 1px 1px 0 #808080;letter-spacing:0.32px;line-height:22px">Lattice Diamond - Spr...</div>
<div class="tbtn" style="left:800px;width:160px;padding-left:23px;letter-spacing:-0.33px">assign_signals.JPG - Paint</div>
<div class="tbtn" style="left:963px;width:160px;padding-left:23px;letter-spacing:-0.09px">blinking_led.vhd - Notepad</div>
<svg class="a" style="left:152px;top:877px" width="16" height="16" viewBox="0 0 16 16" ><circle cx="8" cy="8.500" r="7.200" fill="#d8641c"/><circle cx="8.500" cy="7" r="5" fill="#2f4fa8"/><path d="M6 3.500c1.500-1 3.500-.8 4.500 0-1 .2-1.500 1-1 2-1.200.2-2 .8-2.500 1.800z" fill="#6a90d8"/><path d="M0.800 8.500c0-3 1.800-5.800 4.700-7-1 1.800-1 3 0 4 .8-.6 1.800-.8 2.800-.4-1.800 1-2.300 2.800-1 4.200 1.800 1.500 4.800.7 5.800-1.800.8 4-2 7.500-6 7.500s-6.300-3-6.300-6.500z" fill="#f08c24"/><path d="M1.500 5c.8-1.800 2.200-3 4-3.500-1 1.500-1.200 3-.5 4.500-1.500-.8-2.500-1-3.500-1z" fill="#f8c040"/><path d="M3 13c2 1.800 5.500 2 8 .5-2 2.500-6 2.500-8-.5z" fill="#b8400c"/></svg>
<svg class="a" style="left:315px;top:877px" width="17" height="16" viewBox="0 0 17 16" ><path d="M0.500 3.500h5l1.500 1.500h8.500v9.500h-15z" fill="#f8e088" stroke="#a88828"/><path d="M2.500 7.500h13.500l-2 7h-13.500z" fill="#fbeaa8" stroke="#a88828"/></svg>
<svg class="a" style="left:478px;top:877px" width="17" height="16" viewBox="0 0 17 16" ><rect x="4.500" y="1.500" width="11" height="13" fill="#fff" stroke="#5a78b8"/><path d="M7 5h7M7 7.500h7M7 10h7" stroke="#88a0d0"/><rect x="0.500" y="3.500" width="9" height="9" fill="#2858b0" stroke="#183888"/><text x="5" y="11" font-family="Liberation Sans,sans-serif" font-weight="bold" font-size="8" fill="#fff" text-anchor="middle">W</text></svg>
<svg class="a" style="left:643px;top:877px" width="16" height="16" viewBox="0 0 16 16" ><path d="M8 0.500l7.500 7.500-7.500 7.500-7.500-7.500z" fill="#f0c838" stroke="#b89020"/><path d="M8 3.500l4.500 4.500-4.500 4.500-4.500-4.500z" fill="#fbe8a0"/><circle cx="8" cy="8" r="2" fill="#1a2a8a"/></svg>
<svg class="a" style="left:806px;top:876px" width="16" height="17" viewBox="0 0 16 17" ><path d="M3.500 6h9l-1.500 10h-6z" fill="#e8e8f0" stroke="#787888"/><path d="M5 7l1-6M8 7v-7M10.500 7l2-6" stroke="#c83030" stroke-width="1.600"/><path d="M6.500 7l.5-5M9.500 7l1-5" stroke="#38a038" stroke-width="1.300"/><path d="M4.500 8h7" stroke="#f0b030" stroke-width="2"/></svg>
<svg class="a" style="left:969px;top:877px" width="16" height="16" viewBox="0 0 16 16" ><path d="M2.500 1.500h10l2 13h-10z" fill="#88c8f0" stroke="#3f80c0"/><path d="M4 3h7.500l1.500 10h-7.500z" fill="#c8e8fc"/><path d="M3 1.500h9.500" stroke="#2a68a8" stroke-width="2"/></svg>
<svg class="a" style="left:1164px;top:877px" width="17" height="18" viewBox="0 0 17 18" ><path d="M11 1.500a2.800 2.800 0 0 1 3.500 3.500l-5 5-3.500-3.500z" fill="#c8c8c8" stroke="#404040"/><path d="M7 9l-3.500 3.500c-1.500 1.500 0 4 2 3" stroke="#202020" stroke-width="1.400" fill="none"/><path d="M10 3l3 3M8.500 4.500l3 3" stroke="#606060" stroke-width=".8"/></svg>
<svg class="a" style="left:1187px;top:877px" width="17" height="18" viewBox="0 0 17 18" ><rect x="0.500" y="1.500" width="15" height="11" fill="#f0f4fc" stroke="#1a2a6a"/><rect x="1" y="2" width="14" height="3" fill="#1a2a8a"/><path d="M3 7.500h6M3 10h4" stroke="#404040"/><path d="M13 6.500a2.500 2.500 0 0 0-3 3l-4 5c-1 1.500 1 2.500 2 1.500l4-5a2.500 2.500 0 0 0 3-3l-1.500 1.500-1.500-1.500z" fill="#b8b8b8" stroke="#303030" stroke-width=".9"/></svg>
<svg class="a" style="left:1214px;top:879px" width="15" height="15" viewBox="0 0 15 15" ><path d="M1.500 0.500h12v11h-3v3l-3-3h-6z" fill="#fbf8d0" stroke="#303030" stroke-width="1.200"/><text x="7.500" y="10" font-family="Liberation Sans,sans-serif" font-weight="bold" font-size="10" fill="#1a1a8a" text-anchor="middle">?</text></svg>
<svg class="a" style="left:1241px;top:878px" width="10" height="15" viewBox="0 0 10 15" shape-rendering="crispEdges"><path d="M2 0h7v5h-2v-1h1v-2h-5v1h-1z M0 3h7v5h-7z M1 5v2h5v-2z" fill="#000" fill-rule="evenodd"/><path d="M1 11h7l-3.500 3.500z" fill="#000"/></svg>
<svg class="a" style="left:1325px;top:878px" width="16" height="16" viewBox="0 0 16 16" ><circle cx="8" cy="8" r="8" fill="#e01818"/><path d="M5.500 4v5.500a2.500 2.500 0 0 0 5 0v-5.500" stroke="#600808" stroke-width="2" fill="none"/></svg>
<svg class="a" style="left:1343px;top:878px" width="16" height="16" viewBox="0 0 16 16" ><path d="M0.500 5a10 10 0 0 1 15 0l-2 2a7.500 7.500 0 0 0-11 0z" fill="#48b838" stroke="#1a6a18" stroke-width=".7"/><path d="M3.500 8a6 6 0 0 1 9 0l-1.800 1.800a3.800 3.800 0 0 0-5.400 0z" fill="#48b838" stroke="#1a6a18" stroke-width=".7"/><path d="M6 10.500h4l-.5 5.500h-3z" fill="#48b838" stroke="#1a6a18" stroke-width=".7"/></svg>
<svg class="a" style="left:1360px;top:877px" width="18" height="17" viewBox="0 0 18 17" ><circle cx="9" cy="8.500" r="7.500" fill="#e8ecf8" stroke="#1a2a9a" stroke-width="2"/><path d="M9 4.500v4.500l3 1.500" stroke="#c84040" stroke-width="1.300" fill="none"/><circle cx="5" cy="12.500" r="4" fill="#e02828" stroke="#fff" stroke-width=".8"/><path d="M3.300 10.800l3.400 3.400M6.700 10.800l-3.400 3.400" stroke="#fff" stroke-width="1.300"/></svg>
<div class="a" style="left:1307px;top:874px;width:130px;height:22px;border:1px solid;border-color:#808080 #fff #fff #808080"></div>
<div class="t " style="left:1384px;top:879px;">10:11 AM</div>
<div class="t b" style="left:1312px;top:878px;font-size:13px;top:877px">«</div>
<div class="vl" style="left:1206px;top:875px;height:20px;background:#808080"></div>
<div class="vl" style="left:1207px;top:875px;height:20px;background:#fff"></div>
<div class="vl" style="left:1234px;top:875px;height:20px;background:#808080"></div>
<div class="vl" style="left:1235px;top:875px;height:20px;background:#fff"></div>
</body></html>
